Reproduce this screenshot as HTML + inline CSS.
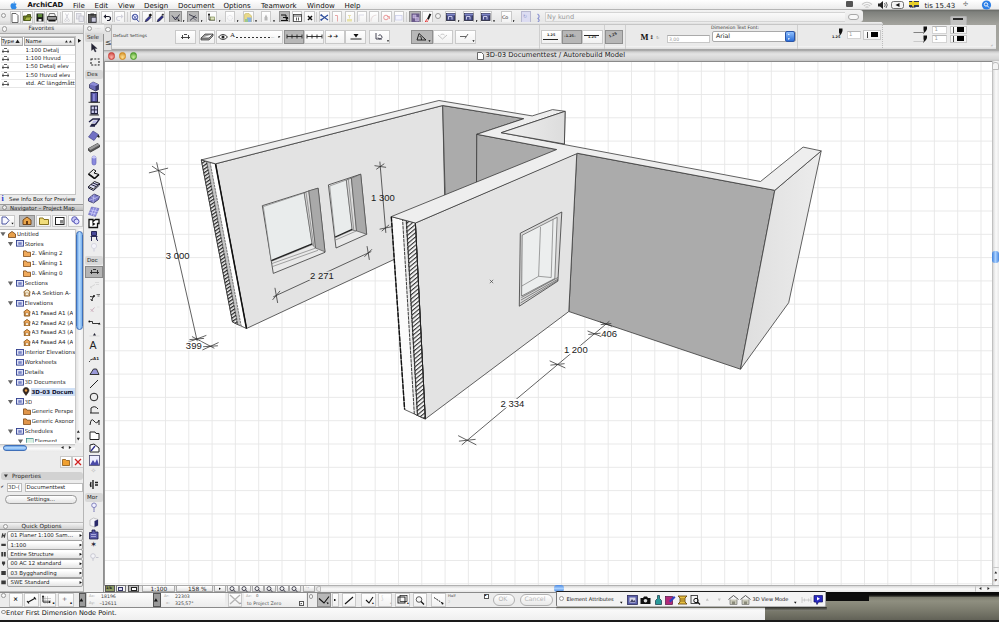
<!DOCTYPE html>
<html><head><meta charset="utf-8"><title>ArchiCAD</title>
<style>
html,body{margin:0;padding:0;}
body{width:999px;height:622px;overflow:hidden;position:relative;background:#fff;font-family:"DejaVu Sans","Liberation Sans",sans-serif;font-size:5.7px;color:#222;}
.a{position:absolute;}
.t{position:absolute;white-space:nowrap;line-height:1.12;}
.btn{position:absolute;background:linear-gradient(#ffffff,#f1f1f1);border:1px solid #c9c9c9;box-sizing:border-box;}
.btnd{position:absolute;background:#b7b7b7;border:1px solid #8f8f8f;box-sizing:border-box;}
.row{position:absolute;left:7.2px;width:76px;height:9.9px;background:linear-gradient(#ffffff 20%,#e4e4e4);border:1px solid #a2a2a2;border-radius:2px;box-sizing:border-box;}
</style></head><body>
<div class="a" style="left:858px;top:9px;width:141px;height:45px;background:linear-gradient(#5e605c,#7e807c 3px,#a2a29c 15px,#a8a8a2)"></div>
<div class="a" style="left:520px;top:590px;width:479px;height:32px;background:linear-gradient(#55554c,#8f8f80 11px,#7c7c6e 20px,#5d5d53)"></div>
<div class="a" style="left:825px;top:592px;width:174px;height:4.500px;background:linear-gradient(#0a0a0a 60%,#55554c)"></div>
<div class="a" style="left:825px;top:594px;width:44px;height:7px;background:#0c0c0c"></div>
<div class="a" style="left:765px;top:607px;width:62px;height:3.500px;background:linear-gradient(#3a3a34,#85857a)"></div>
<svg class="a" style="left:0;top:0" width="999" height="622" viewBox="0 0 999 622">
<defs><clipPath id="cv"><rect x="104" y="61" width="888" height="524"/></clipPath>
<pattern id="hA" width="3" height="3" patternUnits="userSpaceOnUse" patternTransform="rotate(-35)"><rect width="3" height="3" fill="#f4f4f4"/><rect width="3" height="1.3" fill="#222"/></pattern>
<pattern id="hE" width="3.2" height="3.2" patternUnits="userSpaceOnUse" patternTransform="rotate(-40)"><rect width="3.2" height="3.2" fill="#f6f6f6"/><rect width="3.2" height="1.1" fill="#333"/></pattern>
<linearGradient id="gF" x1="0" y1="0" x2="1" y2="0"><stop offset="0" stop-color="#dedede"/><stop offset="1" stop-color="#ececec"/></linearGradient>
<linearGradient id="gC" x1="0" y1="0" x2="1" y2="0"><stop offset="0" stop-color="#f0f0f0"/><stop offset="1" stop-color="#dcdcdc"/></linearGradient>
</defs>
<g clip-path="url(#cv)">
<rect x="104" y="61" width="888" height="524" fill="#fff"/>
<path d="M118.9 61V585M142.2 61V585M165.5 61V585M188.8 61V585M212.1 61V585M235.4 61V585M258.7 61V585M282.0 61V585M305.3 61V585M328.6 61V585M351.9 61V585M375.2 61V585M398.5 61V585M421.8 61V585M445.1 61V585M468.4 61V585M491.7 61V585M515.0 61V585M538.3 61V585M561.6 61V585M584.9 61V585M608.2 61V585M631.5 61V585M654.8 61V585M678.1 61V585M701.4 61V585M724.7 61V585M748.0 61V585M771.3 61V585M794.6 61V585M817.9 61V585M841.2 61V585M864.5 61V585M887.8 61V585M911.1 61V585M934.4 61V585M957.7 61V585M981.0 61V585M104 71.2H992M104 94.5H992M104 117.8H992M104 141.1H992M104 164.4H992M104 187.7H992M104 211.0H992M104 234.3H992M104 257.6H992M104 280.9H992M104 304.2H992M104 327.5H992M104 350.8H992M104 374.1H992M104 397.4H992M104 420.7H992M104 444.0H992M104 467.3H992M104 490.6H992M104 513.9H992M104 537.2H992M104 560.5H992M104 583.8H992M104 607.1H992" stroke="#e6e6e6" stroke-width="0.9" fill="none"/>
<polygon points="215.5,163.8 442.7,105.5 445.5,235.4 246.5,328.5" fill="#e3e3e3" stroke="#3a3a3a" stroke-width="0.8" stroke-linejoin="round"/>
<polygon points="201.3,159.9 215.5,163.8 246.5,328.5 232.5,322.0" fill="#fff" stroke="#3a3a3a" stroke-width="0.8" stroke-linejoin="round"/>
<polygon points="201.3,159.9 206.7,161.4 237.8,324.5 232.5,322.0" fill="url(#hA)" stroke="#222" stroke-width="0.7"/>
<polygon points="206.7,161.4 210.1,162.3 241.2,326.0 237.8,324.5" fill="#c4c4c4" stroke="#333" stroke-width="0.6" stroke-dasharray="2.5 0.8"/>
<line x1="215.5" y1="163.8" x2="246.5" y2="328.5" stroke="#111" stroke-width="1.5"/>
<polygon points="442.7,105.5 523.8,118.7 476.8,134.3 476.5,186.0 445.2,196.0" fill="#ababab" stroke="#3a3a3a" stroke-width="0.8" stroke-linejoin="round"/>
<polygon points="476.8,134.3 556.7,149.5 540.0,165.0 476.5,186.0" fill="#ababab" stroke="#3a3a3a" stroke-width="0.8" stroke-linejoin="round"/>
<polygon points="576.8,153.2 774.8,190.3 740.5,369.2 568.8,311.5" fill="#ababab" stroke="#3a3a3a" stroke-width="0.8" stroke-linejoin="round"/>
<polygon points="774.8,190.3 821.2,150.9 788.7,302.7 740.5,369.2" fill="url(#gF)" stroke="#3a3a3a" stroke-width="0.8" stroke-linejoin="round"/>
<polygon points="501.3,132.7 565.1,111.3 564.4,144.0" fill="url(#gC)" stroke="#3a3a3a" stroke-width="0.8" stroke-linejoin="round"/>
<polygon points="415.4,223.0 576.8,153.2 568.8,311.5 425.3,419.0" fill="#e3e3e3" stroke="#3a3a3a" stroke-width="0.8" stroke-linejoin="round"/>
<polygon points="391.3,216.6 415.4,223.0 425.3,419.0 404.6,409.5" fill="#fbfbfb" stroke="#3a3a3a" stroke-width="0.8" stroke-linejoin="round"/>
<polygon points="402.6,219.6 406.2,220.6 417.4,415.4 414.3,414.0" fill="#ececec" stroke="#1a1a1a" stroke-width="0.85" stroke-dasharray="3.5 0.8"/>
<polygon points="406.5,220.6 415.4,223.0 425.3,419.0 417.6,415.5" fill="url(#hE)" stroke="#1a1a1a" stroke-width="0.8"/>
<line x1="391.3" y1="216.6" x2="404.6" y2="409.5" stroke="#111" stroke-width="1.4" stroke-dasharray="5 1"/>
<line x1="415.4" y1="223.0" x2="425.3" y2="419.0" stroke="#222" stroke-width="1"/>
<polygon points="201.3,159.9 438.9,100.5 532.2,115.9 552.5,109.6 565.1,111.3 501.3,132.7 760.5,181.5 803.1,147.1 821.2,150.9 774.8,190.3 577.7,153.3 415.4,223.0 391.3,216.6 556.7,149.5 476.8,134.3 523.8,118.7 442.7,105.5 215.5,163.8" fill="#eeeeee" stroke="#3a3a3a" stroke-width="0.8" stroke-linejoin="round"/>
<polygon points="501.3,132.7 565.1,111.3 564.4,144.0" fill="url(#gC)" stroke="#3a3a3a" stroke-width="0.8" stroke-linejoin="round"/>
<polygon points="262.3,205.7 318.1,188.2 325.0,252.3 273.3,273.4" fill="#e9e9e9" stroke="#3a3a3a" stroke-width="0.8" stroke-linejoin="round"/>
<polygon points="263.3,206.6 304.2,193.0 312.2,244.7 271.3,261.4" fill="#e9ecec" stroke="#555" stroke-width="0.5"/>
<polygon points="304.2,193.0 308.8,190.8 315.6,248.1 312.2,244.7" fill="#dcdcdc" stroke="#444" stroke-width="0.6"/>
<polygon points="308.8,190.8 318.1,188.2 325.0,251.8 315.6,248.1" fill="#a9a9a9" stroke="#444" stroke-width="0.6"/>
<path d="M271.3 260.6L312.2 243.9" stroke="#222" stroke-width="1.4"/>
<path d="M272 263.5L315.6 248.1M272.6 266.5L318 250.3" stroke="#555" stroke-width="0.5"/>
<path d="M306 192.4L313.8 246" stroke="#555" stroke-width="0.5"/>
<polygon points="328.4,184.9 360.7,174.2 366.7,234.3 336.0,248.0" fill="#e9e9e9" stroke="#3a3a3a" stroke-width="0.8" stroke-linejoin="round"/>
<polygon points="329.7,186.0 346.3,180.0 352.2,230.1 335.2,237.7" fill="#e9ecec" stroke="#555" stroke-width="0.5"/>
<polygon points="346.3,180.0 351.4,178.1 356.5,230.9 352.2,230.1" fill="#dcdcdc" stroke="#444" stroke-width="0.6"/>
<polygon points="351.4,178.1 360.7,174.2 366.7,234.3 356.5,230.9" fill="#a9a9a9" stroke="#444" stroke-width="0.6"/>
<path d="M335.2 237L352.2 229.4" stroke="#222" stroke-width="1.3"/>
<path d="M335.5 240L356.5 230.9" stroke="#555" stroke-width="0.5"/>
<path d="M348.3 179.3L353.8 230.3" stroke="#555" stroke-width="0.5"/>
<polygon points="520.3,233.2 561.8,212.0 557.9,281.1 519.3,306.2" fill="#dadada" stroke="#3a3a3a" stroke-width="0.8" stroke-linejoin="round"/>
<polygon points="522.2,235.2 557.2,217.3 554.8,278.5 521.6,296.0" fill="#eceeee" stroke="#444" stroke-width="0.6"/>
<path d="M540.5 227L538.6 276.3M553 219.5L551.2 277.5M538.6 276.3L551.2 277.5M538.6 276.3L521.8 286" stroke="#666" stroke-width="0.6" fill="none"/>
<path d="M521.4 297.5L557.9 277.5M521 300L557.9 279.2M520.5 303L557.9 280.3" stroke="#444" stroke-width="0.6" fill="none"/>
<path d="M156.7 162.7L197.2 341.0M149.3 172.8L167.7 168.2M152.3 166.3L164.7 174.7M187.5 342.5L206.0 335.5M189.8 339.6L203.7 338.4M192.3 336.7L214.0 348.1M202.8 349.8L218.2 342.7M203.5 346.7L217.5 345.8M273.6 296.7L370.9 251.7M275.0 288.2L277.6 302.6M272.8 299.6L279.8 291.2M367.1 246.5L369.3 259.5M364.7 256.5L371.7 249.5M379.9 162.0L385.8 232.5M374.9 165.7L385.7 167.3M376.6 169.1L384.0 163.9M380.0 229.1L390.8 226.9M382.0 230.9L388.8 225.1M462.1 444.6L609.1 321.5M458.5 435.8L476.0 444.7M459.3 441.1L475.2 439.4M550.0 361.0L565.0 367.8M550.8 365.1L564.2 363.7M587.9 331.1L600.9 336.5M588.7 334.4L600.1 333.2M600.3 322.0L611.7 326.2M601.1 324.6L610.9 323.6" stroke="#2e2e2e" stroke-width="0.75" fill="none" stroke-linecap="round"/>
<path d="M489.8 279.8l3.4 3.4m0 -3.4l-3.4 3.4" stroke="#333" stroke-width="0.6"/>
<text x="177.6" y="258.9" font-family="Liberation Sans, sans-serif" font-size="9.500" fill="#1a1a1a" text-anchor="middle">3 000</text>
<rect x="186.0" y="341.6" width="15.5" height="8.600" fill="#fff"/>
<text x="193.8" y="349.3" font-family="Liberation Sans, sans-serif" font-size="9.500" fill="#1a1a1a" text-anchor="middle">399</text>
<rect x="309.4" y="271.5" width="25.0" height="8.600" fill="#e3e3e3"/>
<text x="321.9" y="279.2" font-family="Liberation Sans, sans-serif" font-size="9.500" fill="#1a1a1a" text-anchor="middle">2 271</text>
<text x="382.9" y="201.1" font-family="Liberation Sans, sans-serif" font-size="9.500" fill="#1a1a1a" text-anchor="middle">1 300</text>
<rect x="499.9" y="399.0" width="25.0" height="8.600" fill="#fff"/>
<text x="512.4" y="406.7" font-family="Liberation Sans, sans-serif" font-size="9.500" fill="#1a1a1a" text-anchor="middle">2 334</text>
<rect x="563.3" y="345.6" width="25.0" height="8.600" fill="#fff"/>
<text x="575.8" y="353.3" font-family="Liberation Sans, sans-serif" font-size="9.500" fill="#1a1a1a" text-anchor="middle">1 200</text>
<rect x="609.2" y="329.5" width="0.0" height="8.600" fill="#fff"/>
<text x="609.2" y="337.2" font-family="Liberation Sans, sans-serif" font-size="9.500" fill="#1a1a1a" text-anchor="middle">406</text>
</g></svg>
<div class="a" style="left:0.0px;top:0.0px;width:999.0px;height:10.0px;background:linear-gradient(#ffffff,#ececec);border-bottom:1px solid #b5b5b5;box-sizing:border-box"></div>
<svg class="a" style="left:9px;top:0.5px" width="9" height="9" viewBox="0 0 18 18"><path d="M12 1c-1.5.3-2.8 1.500-2.800 3 1.500 0 2.900-1.400 2.800-3zM9 5C7.500 4.200 3 4.500 3 9.500c0 3 2 7 4 7 1 0 1.500-.6 2.500-.6s1.500.6 2.500.6c1.600 0 3-2.500 3.500-4.300-2.800-1.200-2.700-5 .1-6.100C14 4.200 10.500 4.200 9 5z" fill="#2f8ae8"/></svg>
<div class="t" style="left:27.5px;top:2.0px;font-size:6.80px;font-weight:bold;color:#111">ArchiCAD</div>
<div class="t" style="left:73.0px;top:1.5px;font-size:7.04px;color:#111">File</div>
<div class="t" style="left:94.5px;top:1.5px;font-size:7.04px;color:#111">Edit</div>
<div class="t" style="left:118.0px;top:1.5px;font-size:7.04px;color:#111">View</div>
<div class="t" style="left:144.0px;top:1.5px;font-size:7.04px;color:#111">Design</div>
<div class="t" style="left:178.0px;top:1.5px;font-size:7.04px;color:#111">Document</div>
<div class="t" style="left:223.5px;top:1.5px;font-size:7.04px;color:#111">Options</div>
<div class="t" style="left:261.0px;top:1.5px;font-size:7.04px;color:#111">Teamwork</div>
<div class="t" style="left:307.0px;top:1.5px;font-size:7.04px;color:#111">Window</div>
<div class="t" style="left:344.5px;top:1.5px;font-size:7.04px;color:#111">Help</div>
<div class="t" style="left:924.5px;top:1.5px;font-size:7.04px;color:#222">tis 15.43</div>
<div class="a" style="left:846.0px;top:1.0px;width:7.0px;height:6.0px;background:#555;border-radius:1px"></div>
<svg class="a" style="left:860px;top:0" width="14" height="10" viewBox="0 0 14 10"><path d="M2 4.500Q7 0 12 4.500M3.800 6Q7 3 10.200 6M5.500 7.500Q7 6.200 8.500 7.500" stroke="#c8c8c8" stroke-width="1.100" fill="none"/></svg>
<svg class="a" style="left:876px;top:0" width="14" height="10" viewBox="0 0 14 10"><path d="M2 3.500h2l3-2.500v8l-3-2.500h-2z" fill="#222"/><path d="M8.500 3q1.500 2 0 4M10 2q2.500 3 0 6" stroke="#444" stroke-width="0.800" fill="none"/></svg>
<svg class="a" style="left:891px;top:1px" width="14" height="8" viewBox="0 0 14 8"><rect x="0.500" y="0.500" width="12" height="7" rx="2" fill="#f4f4f4" stroke="#555" stroke-width="0.800"/><path d="M8.500 2v4l-4-2z" fill="#111"/></svg>
<div class="a" style="left:909.0px;top:0.5px;width:10.0px;height:6.5px;background:#e8cf2a;"></div>
<div class="a" style="left:909.0px;top:0.5px;width:10.0px;height:1.8px;background:#333a55;"></div>
<div class="a" style="left:909.0px;top:5.0px;width:10.0px;height:2.0px;background:#333a55;"></div>
<div class="a" style="left:912.3px;top:0.5px;width:1.5px;height:6.5px;background:#e8cf2a;"></div>
<div class="a" style="left:909.0px;top:2.6px;width:10.0px;height:1.6px;background:#e8cf2a;"></div>
<div class="t" style="left:910.0px;top:6.9px;font-size:2.29px;color:#224;font-weight:bold">PRO</div>
<div class="t" style="left:963.0px;top:1.3px;font-size:6.16px;color:#777">✣</div>
<svg class="a" style="left:981px;top:0" width="11" height="10" viewBox="0 0 11 10"><circle cx="5.500" cy="5" r="4.600" fill="#2d7fe6"/><circle cx="5" cy="4.400" r="1.700" fill="none" stroke="#fff" stroke-width="0.900"/><path d="M6.200 5.700L8 7.600" stroke="#fff" stroke-width="1"/></svg>
<div class="a" style="left:0.0px;top:10.0px;width:862.5px;height:11.5px;background:linear-gradient(#f3f3f3,#e6e6e6);box-sizing:border-box;border-radius:0 3px 3px 0"></div>
<div class="a" style="left:0.0px;top:21.0px;width:104.0px;height:3.5px;background:linear-gradient(#e4e4e4,#cfcfcf);"></div>
<div class="a" style="left:847.5px;top:14.0px;width:11.5px;height:5.5px;background:#f8f8f8;border:1px solid #a8a8a8;border-radius:3px;box-sizing:border-box"></div>
<div class="a" style="left:1px;top:13px;width:5px;height:5px;border:1px solid #999;border-radius:50%;background:#f4f4f4;box-sizing:border-box"></div>
<div class="btn" style="left:9.5px;top:11.0px;width:11.0px;height:12.5px"></div>
<svg class="a" style="left:11.0px;top:12.5px" width="8" height="10" viewBox="0 0 8 10"><path d="M1 0.500h4l2 2v7h-6z" fill="#fff" stroke="#555" stroke-width="0.900"/></svg>
<div class="btn" style="left:21.5px;top:11.0px;width:11.0px;height:12.5px"></div>
<svg class="a" style="left:22.5px;top:13.0px" width="9" height="9" viewBox="0 0 9 9"><path d="M0.500 3h3l1-1.500h3v6h-7z" fill="#6f7f25" stroke="#39440c" stroke-width="0.800"/><path d="M1.500 7.500l1.500-3.500h5.500l-1.500 3.500z" fill="#a5b545" stroke="#39440c" stroke-width="0.600"/></svg>
<div class="btn" style="left:34.0px;top:11.0px;width:11.0px;height:12.5px"></div>
<svg class="a" style="left:35.5px;top:13.0px" width="8" height="9" viewBox="0 0 8 9"><rect x="0.500" y="0.500" width="7" height="8" fill="#1a1a1a"/><rect x="1.800" y="1" width="4.400" height="3.200" fill="#5e8a3a"/><rect x="2.500" y="6" width="3" height="2.500" fill="#e8e8e8"/></svg>
<div class="btn" style="left:46.0px;top:11.0px;width:11.5px;height:12.5px"></div>
<svg class="a" style="left:47.0px;top:13.0px" width="10" height="9" viewBox="0 0 10 9"><path d="M2.500 0.500h5l1 3h-7z" fill="#eee" stroke="#444" stroke-width="0.700"/><path d="M0.500 3.500h9v3.500h-9z" fill="#999" stroke="#222" stroke-width="0.800"/><path d="M1.500 7h7v1.500h-7z" fill="#111"/></svg>
<div class="a" style="left:59.5px;top:12.0px;width:1.0px;height:11.0px;background:#d0d0d0"></div>
<div class="btn" style="left:62.0px;top:11.0px;width:10.5px;height:12.5px"></div>
<svg class="a" style="left:64.0px;top:13.0px" width="6" height="9" viewBox="0 0 6 9"><path d="M1.500 0.500l3 6M4.500 0.500l-3 6" stroke="#cfcfd6" stroke-width="0.900"/><circle cx="1.500" cy="7.500" r="1" fill="none" stroke="#cfcfd6" stroke-width="0.700"/><circle cx="4.500" cy="7.500" r="1" fill="none" stroke="#cfcfd6" stroke-width="0.700"/></svg>
<div class="btn" style="left:74.0px;top:11.0px;width:10.5px;height:12.5px"></div>
<svg class="a" style="left:75.5px;top:13.0px" width="8" height="9" viewBox="0 0 8 9"><rect x="0.500" y="0.500" width="4.500" height="5.500" fill="#e6e6ec" stroke="#c6c6d0" stroke-width="0.800"/><rect x="3" y="3" width="4.500" height="5.500" fill="#e6e6ec" stroke="#c0c0cc" stroke-width="0.800"/></svg>
<div class="btn" style="left:86.0px;top:11.0px;width:11.0px;height:12.5px"></div>
<svg class="a" style="left:87.5px;top:12.5px" width="9" height="10" viewBox="0 0 9 10"><rect x="0.500" y="1.500" width="7.500" height="8" fill="#5a5a5a" stroke="#2a2a2a" stroke-width="0.800"/><rect x="2.500" y="0.500" width="3.500" height="2" fill="#333"/><rect x="3.500" y="4.500" width="4.500" height="4.500" fill="#c8c8dc" stroke="#445" stroke-width="0.600"/></svg>
<div class="a" style="left:99.0px;top:12.0px;width:1.0px;height:11.0px;background:#d0d0d0"></div>
<div class="btn" style="left:101.0px;top:11.0px;width:11.5px;height:12.5px"></div>
<svg class="a" style="left:103.0px;top:14.0px" width="8" height="7" viewBox="0 0 8 7"><path d="M2 2.500h3.500a2 2 0 0 1 0 4h-1.500" fill="none" stroke="#1a1a2a" stroke-width="1.200"/><path d="M0.500 2.500l2.500-2.200v4.400z" fill="#1a1a2a"/></svg>
<div class="btn" style="left:113.5px;top:11.0px;width:11.0px;height:12.5px"></div>
<svg class="a" style="left:115.5px;top:14.0px" width="8" height="7" viewBox="0 0 8 7"><path d="M6 2.500h-3.500a2 2 0 0 0 0 4h1.500" fill="none" stroke="#d2d2dc" stroke-width="1.200"/><path d="M7.500 2.500l-2.500-2.200v4.400z" fill="#d2d2dc"/></svg>
<div class="a" style="left:126.5px;top:12.0px;width:1.0px;height:11.0px;background:#d0d0d0"></div>
<div class="btn" style="left:129.5px;top:11.0px;width:10.5px;height:12.5px"></div>
<svg class="a" style="left:130.5px;top:12.5px" width="9" height="10" viewBox="0 0 9 10"><circle cx="4" cy="4" r="2.800" fill="#e8eaff" stroke="#3a4a9a" stroke-width="0.900"/><path d="M2 2l5 6M6 2.500l-4 4M5.500 6l2.500 3" stroke="#3a4a9a" stroke-width="0.800"/></svg>
<div class="btn" style="left:142.0px;top:11.0px;width:10.5px;height:12.5px"></div>
<svg class="a" style="left:143.5px;top:12.5px" width="8" height="10" viewBox="0 0 8 10"><path d="M1 9l1-2.500 3.500-3.500 1.500 1.500-3.500 3.500z" fill="#3a3a9a" stroke="#111" stroke-width="0.500"/><path d="M4.500 2l2-1.500 1.500 1.500-1.500 2z" fill="#111"/></svg>
<div class="btn" style="left:154.5px;top:11.0px;width:10.5px;height:12.5px"></div>
<svg class="a" style="left:156.0px;top:12.5px" width="8" height="10" viewBox="0 0 8 10"><path d="M1 9l1-2.500 4-4 1.500 1.500-4 4z" fill="#2a2a8a" stroke="#111" stroke-width="0.500"/><path d="M5.500 1.500l1.500-1 1 1-1 1.500z" fill="#333"/></svg>
<div class="btnd" style="left:169.0px;top:11.0px;width:12.5px;height:12.5px"></div>
<svg class="a" style="left:170.5px;top:13.0px" width="10" height="9" viewBox="0 0 10 9"><path d="M1 2.500l3.500 4.500 4-5.500" fill="none" stroke="#223" stroke-width="0.900"/><path d="M3 5.500q2-2.500 4.500 0" fill="none" stroke="#335" stroke-width="0.700"/><path d="M6.500 6l2.500 1.200-1.800 1z" fill="#111"/></svg>
<div class="a" style="left:182.5px;top:20.300px;width:2px;height:2px;background:#111;clip-path:polygon(0 0,100% 0,50% 100%)"></div>
<div class="btnd" style="left:186.5px;top:11.0px;width:12.5px;height:12.5px"></div>
<svg class="a" style="left:188.0px;top:13.0px" width="10" height="9" viewBox="0 0 10 9"><path d="M1 1.500l8 3.500M2 7.500l5.500-5" fill="none" stroke="#334" stroke-width="0.900"/><path d="M5 5l3.500 2.500" stroke="#556" stroke-width="0.700"/></svg>
<div class="a" style="left:200.5px;top:20.300px;width:2px;height:2px;background:#111;clip-path:polygon(0 0,100% 0,50% 100%)"></div>
<div class="btn" style="left:205.5px;top:11.0px;width:11.5px;height:12.5px"></div>
<svg class="a" style="left:207.0px;top:13.0px" width="9" height="9" viewBox="0 0 9 9"><path d="M2 1.500v5.500h6" fill="none" stroke="#222" stroke-width="0.900"/><rect x="3.500" y="4" width="4" height="3" fill="#dfe3c2" stroke="#6a7a3a" stroke-width="0.600"/><circle cx="2" cy="1.500" r="1" fill="#111"/></svg>
<div class="a" style="left:218.5px;top:20.300px;width:2px;height:2px;background:#111;clip-path:polygon(0 0,100% 0,50% 100%)"></div>
<div class="btn" style="left:224.5px;top:11.0px;width:10.5px;height:12.5px"></div>
<svg class="a" style="left:226.0px;top:13.5px" width="8" height="8" viewBox="0 0 8 8"><circle cx="4" cy="4" r="2.500" fill="none" stroke="#d4d4dc" stroke-width="0.800" stroke-dasharray="1 0.700"/></svg>
<div class="a" style="left:236.5px;top:20.300px;width:2px;height:2px;background:#111;clip-path:polygon(0 0,100% 0,50% 100%)"></div>
<div class="btn" style="left:242.5px;top:11.0px;width:11.0px;height:12.5px"></div>
<svg class="a" style="left:244.0px;top:12.5px" width="8" height="10" viewBox="0 0 8 10"><path d="M0.500 2q0-1.500 1.500-1.500h3l2.500 2.500v6.500h-7z" fill="#e8d88a" stroke="#c8b860" stroke-width="0.600"/><rect x="3" y="4.500" width="4.500" height="4.500" fill="#8ab0e0"/><rect x="1" y="6" width="3" height="3" fill="#9ac890"/></svg>
<div class="a" style="left:255.0px;top:20.300px;width:2px;height:2px;background:#111;clip-path:polygon(0 0,100% 0,50% 100%)"></div>
<div class="btn" style="left:261.0px;top:11.0px;width:9.5px;height:12.5px"></div>
<svg class="a" style="left:263.5px;top:14.0px" width="4" height="7" viewBox="0 0 4 7"><path d="M2 0.500l1.500 3v3h-3v-3z" fill="#b8b8b8"/></svg>
<div class="a" style="left:273.0px;top:20.300px;width:2px;height:2px;background:#111;clip-path:polygon(0 0,100% 0,50% 100%)"></div>
<div class="btnd" style="left:278.5px;top:11.0px;width:11.5px;height:12.5px"></div>
<svg class="a" style="left:280.0px;top:13.0px" width="9" height="9" viewBox="0 0 9 9"><path d="M1 2h5v2.500h-3l5 0M1 7.500h7" fill="none" stroke="#111" stroke-width="1"/><path d="M5.500 4l3 1.500-2.500 2z" fill="#111"/></svg>
<div class="btn" style="left:291.5px;top:11.0px;width:10.5px;height:12.5px"></div>
<svg class="a" style="left:292.5px;top:13.5px" width="9" height="8" viewBox="0 0 9 8"><rect x="0.500" y="0.500" width="8" height="7" fill="#fff" stroke="#333" stroke-width="0.800"/><path d="M0.500 2h8M3.500 3.500v3M5.500 3.500v3" stroke="#333" stroke-width="0.800"/></svg>
<div class="btn" style="left:304.0px;top:11.0px;width:10.5px;height:12.5px"></div>
<svg class="a" style="left:306.5px;top:14.5px" width="6" height="6" viewBox="0 0 6 6"><path d="M1 1l4 4M5 1l-4 4" stroke="#111" stroke-width="1.500"/></svg>
<div class="a" style="left:316.0px;top:12.0px;width:1.0px;height:11.0px;background:#d0d0d0"></div>
<div class="btn" style="left:318.5px;top:11.0px;width:11.5px;height:12.5px"></div>
<svg class="a" style="left:320.0px;top:14.0px" width="9" height="7" viewBox="0 0 9 7"><path d="M1 1l7 5M1 6l7-5" stroke="#2a4a9a" stroke-width="1.100"/><circle cx="1.300" cy="1.300" r="1" fill="#2a4a9a"/><circle cx="1.300" cy="5.800" r="1" fill="#2a4a9a"/></svg>
<div class="btn" style="left:332.0px;top:11.0px;width:10.0px;height:12.5px"></div>
<svg class="a" style="left:334.0px;top:13.5px" width="6" height="8" viewBox="0 0 6 8"><path d="M1 1.500h2.500v6" fill="none" stroke="#e8a8a8" stroke-width="1"/></svg>
<div class="btn" style="left:344.5px;top:11.0px;width:10.0px;height:12.5px"></div>
<svg class="a" style="left:346.0px;top:13.5px" width="7" height="8" viewBox="0 0 7 8"><path d="M2 1.500h3M3.500 1.500v3" stroke="#e8e2b0" stroke-width="1"/><rect x="1" y="5" width="5" height="2.500" fill="#e8e2a8"/></svg>
<div class="btn" style="left:356.5px;top:11.0px;width:10.0px;height:12.5px"></div>
<svg class="a" style="left:358.0px;top:13.5px" width="7" height="8" viewBox="0 0 7 8"><path d="M1 7V1h5" fill="none" stroke="#dcdce8" stroke-width="1"/></svg>
<div class="btn" style="left:368.5px;top:11.0px;width:10.0px;height:12.5px"></div>
<svg class="a" style="left:370.0px;top:13.5px" width="7" height="8" viewBox="0 0 7 8"><path d="M1 7.500q0-6 5.500-6.500" fill="none" stroke="#e6dcdc" stroke-width="1.100"/></svg>
<div class="btn" style="left:381.0px;top:11.0px;width:10.5px;height:12.5px"></div>
<svg class="a" style="left:383.0px;top:14.0px" width="7" height="7" viewBox="0 0 7 7"><circle cx="3" cy="3.500" r="2.300" fill="none" stroke="#e89090" stroke-width="0.900"/><path d="M4 2.500h2.500v2.500" fill="none" stroke="#e89090" stroke-width="0.800"/></svg>
<div class="btn" style="left:393.5px;top:11.0px;width:10.5px;height:12.5px"></div>
<svg class="a" style="left:395.0px;top:14.5px" width="8" height="6" viewBox="0 0 8 6"><rect x="0.500" y="0.500" width="6.500" height="4.500" fill="#f4f4ff" stroke="#ccd0ea" stroke-width="0.800"/></svg>
<div class="a" style="left:406.0px;top:12.0px;width:1.0px;height:11.0px;background:#d0d0d0"></div>
<div class="btnd" style="left:409.0px;top:11.0px;width:11.5px;height:12.5px"></div>
<svg class="a" style="left:410.5px;top:12.5px" width="9" height="10" viewBox="0 0 9 10"><rect x="0.500" y="0.500" width="8" height="9" fill="#6a5a8a"/><path d="M2 2h3v3h-3zM4.500 4.500h3v3.500h-3z" fill="#a898c8" stroke="#d8c8e8" stroke-width="0.500"/></svg>
<div class="btn" style="left:422.0px;top:11.0px;width:11.0px;height:12.5px"></div>
<svg class="a" style="left:423.5px;top:12.5px" width="8" height="10" viewBox="0 0 8 10"><path d="M5.500 0.500l1.800 0.800-2.500 5.500-1.800-0.800z" fill="#111"/><path d="M2.800 6.200l-1.500 2.800q1.500 0.500 3-1.500" fill="none" stroke="#e02020" stroke-width="0.900"/></svg>
<div class="a" style="left:435px;top:12.500px;width:6px;height:6px;border:1px solid #999;border-radius:50%;background:#f4f4f4;box-sizing:border-box"></div>
<div class="btn" style="left:444.5px;top:11.0px;width:11.5px;height:12.5px"></div>
<svg class="a" style="left:445.5px;top:13.0px" width="10" height="8" viewBox="0 0 10 8"><rect x="0.500" y="0.500" width="8.500" height="7" fill="#4a4f8a" stroke="#223" stroke-width="0.800"/><rect x="0.500" y="0.500" width="8.500" height="1.800" fill="#8088c8"/><path d="M2.500 6.500v-3h3.500v3" fill="none" stroke="#e8e8ff" stroke-width="0.800"/></svg>
<div class="a" style="left:457.5px;top:20.300px;width:2px;height:2px;background:#111;clip-path:polygon(0 0,100% 0,50% 100%)"></div>
<div class="btn" style="left:462.5px;top:11.0px;width:11.5px;height:12.5px"></div>
<svg class="a" style="left:463.5px;top:13.0px" width="10" height="8" viewBox="0 0 10 8"><rect x="0.500" y="0.500" width="8.500" height="7" fill="#4a4f8a" stroke="#223" stroke-width="0.800"/><rect x="0.500" y="0.500" width="8.500" height="1.800" fill="#8088c8"/><path d="M2.500 6.500v-3h3.500v3" fill="none" stroke="#e8e8ff" stroke-width="0.800"/></svg>
<div class="a" style="left:475.5px;top:20.300px;width:2px;height:2px;background:#111;clip-path:polygon(0 0,100% 0,50% 100%)"></div>
<div class="btn" style="left:480.0px;top:11.0px;width:11.5px;height:12.5px"></div>
<svg class="a" style="left:481.0px;top:13.0px" width="10" height="8" viewBox="0 0 10 8"><rect x="0.500" y="0.500" width="8.500" height="7" fill="#4a4f8a" stroke="#223" stroke-width="0.800"/><rect x="0.500" y="0.500" width="8.500" height="1.800" fill="#8088c8"/><path d="M2.500 6.500v-3h3.500v3" fill="none" stroke="#e8e8ff" stroke-width="0.800"/></svg>
<div class="a" style="left:493.0px;top:20.300px;width:2px;height:2px;background:#111;clip-path:polygon(0 0,100% 0,50% 100%)"></div>
<div class="btn" style="left:500.5px;top:11.0px;width:11.0px;height:12.5px"></div>
<div class="t" style="left:502.0px;top:14.6px;font-size:4.84px;color:#222">Co</div>
<div class="a" style="left:512.5px;top:20.300px;width:2px;height:2px;background:#111;clip-path:polygon(0 0,100% 0,50% 100%)"></div>
<div class="a" style="left:520.500px;top:11px;width:10.500px;height:12.500px;background:#dcdcf2;border:1px solid #b8b8d0;box-sizing:border-box"></div>
<div class="t" style="left:523.0px;top:14.1px;font-size:4.84px;color:#8a90c8">↻</div>
<svg class="a" style="left:535.5px;top:12.5px" width="6" height="10" viewBox="0 0 6 10"><path d="M1.500 1q3 2 0.500 4.500q2.500 2-0.500 4" fill="none" stroke="#8a92d0" stroke-width="1.200"/></svg>
<div class="a" style="left:544.5px;top:11.5px;width:300.0px;height:10.5px;background:linear-gradient(#fafafa,#eeeeee);border:1px solid #d4d4d4;border-right:none;box-sizing:border-box"></div>
<div class="t" style="left:547.0px;top:13.7px;font-size:6.60px;color:#9a9a9a">Ny kund</div>
<div class="a" style="left:0.0px;top:24.5px;width:84.0px;height:180.0px;background:#ececec"></div>
<div class="a" style="left:0.0px;top:24.5px;width:83.5px;height:9.0px;background:linear-gradient(#f6f6f6,#d4d4d4);border-bottom:1px solid #aaa;box-sizing:border-box"></div>
<div class="a" style="left:1.500px;top:26px;width:5.500px;height:5.500px;border:1px solid #999;border-radius:50%;background:#f6f6f6;box-sizing:border-box"></div>
<div class="t" style="left:28.5px;top:25.4px;font-size:5.72px;color:#333">Favorites</div>
<div class="a" style="left:0.0px;top:36.0px;width:75.5px;height:158.5px;background:#fff;border:1px solid #c4c4c4;border-left:none;box-sizing:border-box"></div>
<div class="a" style="left:0.5px;top:36.5px;width:22.5px;height:9.0px;background:linear-gradient(#fdfdfd,#dedede);border:1px solid #a8a8a8;box-sizing:border-box"></div>
<div class="a" style="left:23.5px;top:36.5px;width:51.5px;height:9.0px;background:linear-gradient(#fdfdfd,#dedede);border:1px solid #a8a8a8;box-sizing:border-box"></div>
<div class="t" style="left:1.5px;top:37.7px;font-size:5.46px;color:#222">Type</div>
<div class="a" style="left:15.4px;top:39.0px;width:4.4px;height:4.4px;background:#222;clip-path:polygon(0 90%,100% 90%,50% 10%)"></div>
<div class="t" style="left:25.5px;top:37.7px;font-size:5.46px;color:#222">Name</div>
<div class="a" style="left:65.0px;top:40.1px;width:2.8px;height:2.8px;background:#222;clip-path:polygon(0 90%,100% 90%,50% 10%)"></div>
<div class="a" style="left:69.0px;top:40.1px;width:2.8px;height:2.8px;background:#222;clip-path:polygon(0 90%,100% 90%,50% 10%)"></div>
<div class="a" style="left:77.4px;top:38.8px;width:4.0px;height:4.0px;background:#111;clip-path:polygon(15% 0,95% 50%,15% 100%)"></div>
<div class="t" style="left:25.5px;top:46.7px;font-size:5.46px;color:#262626;max-width:49px;overflow:hidden">1:100 Detalj</div>
<svg class="a" style="left:1px;top:46.5px" width="9" height="7" viewBox="0 0 9 7"><path d="M1 4.500h7M2 2.500v3.500M7 2.500v3.500M3 1.500h3" stroke="#333" stroke-width="0.800" fill="none"/></svg>
<div class="a" style="left:0.5px;top:54.0px;width:74.5px;height:0.6px;background:#e6e6e6"></div>
<div class="t" style="left:25.5px;top:55.0px;font-size:5.46px;color:#262626;max-width:49px;overflow:hidden">1:100 Huvud</div>
<svg class="a" style="left:1px;top:54.8px" width="9" height="7" viewBox="0 0 9 7"><path d="M1 4.500h7M2 2.500v3.500M7 2.500v3.500M3 1.500h3" stroke="#333" stroke-width="0.800" fill="none"/></svg>
<div class="a" style="left:0.5px;top:62.2px;width:74.5px;height:0.6px;background:#e6e6e6"></div>
<div class="t" style="left:25.5px;top:63.2px;font-size:5.46px;color:#262626;max-width:49px;overflow:hidden">1:50 Detalj elev</div>
<svg class="a" style="left:1px;top:63.0px" width="9" height="7" viewBox="0 0 9 7"><path d="M1 4.500h7M2 2.500v3.500M7 2.500v3.500M3 1.500h3" stroke="#333" stroke-width="0.800" fill="none"/></svg>
<div class="a" style="left:0.5px;top:70.5px;width:74.5px;height:0.6px;background:#e6e6e6"></div>
<div class="t" style="left:25.5px;top:71.5px;font-size:5.46px;color:#262626;max-width:49px;overflow:hidden">1:50 Huvud elev</div>
<svg class="a" style="left:1px;top:71.2px" width="9" height="7" viewBox="0 0 9 7"><path d="M1 4.500h7M2 2.500v3.500M7 2.500v3.500M3 1.500h3" stroke="#333" stroke-width="0.800" fill="none"/></svg>
<div class="a" style="left:0.5px;top:78.8px;width:74.5px;height:0.6px;background:#e6e6e6"></div>
<div class="t" style="left:25.5px;top:79.7px;font-size:5.46px;color:#262626;max-width:49px;overflow:hidden">std. AC längdmått</div>
<svg class="a" style="left:1px;top:79.5px" width="9" height="7" viewBox="0 0 9 7"><path d="M1 4.500h7M2 2.500v3.500M7 2.500v3.500M3 1.500h3" stroke="#333" stroke-width="0.800" fill="none"/></svg>
<div class="a" style="left:0.5px;top:87.0px;width:74.5px;height:0.6px;background:#e6e6e6"></div>
<div class="t" style="left:1.5px;top:194.5px;font-size:8.00px;color:#2233cc;font-weight:bold;font-family:'Liberation Serif',serif">i</div>
<div class="t" style="left:9.0px;top:196.1px;font-size:5.46px;color:#262626">See Info Box for Preview</div>
<div class="a" style="left:0.0px;top:204.0px;width:84.0px;height:268.0px;background:#ececec"></div>
<div class="a" style="left:0.0px;top:204.3px;width:83.5px;height:7.0px;background:linear-gradient(#dcdcdc,#bdbdbd);border-top:1px solid #999;border-bottom:1px solid #999;box-sizing:border-box"></div>
<div class="a" style="left:1.500px;top:205px;width:5px;height:5px;border:1px solid #888;border-radius:50%;background:#eee;box-sizing:border-box"></div>
<div class="t" style="left:10.0px;top:204.5px;font-size:5.46px;color:#262626">Navigator – Project Map</div>
<div class="btn" style="left:-1.0px;top:214.5px;width:16.0px;height:12.0px"></div>
<svg class="a" style="left:1px;top:216px" width="12" height="9" viewBox="0 0 12 9"><path d="M1 1h4l3 3.500-3 3.500h-4z" fill="#f8f8ff" stroke="#4a55a0" stroke-width="1"/></svg>
<div class="a" style="left:11.4px;top:222.4px;width:2.2px;height:2.2px;background:#111;clip-path:polygon(0 15%,100% 15%,50% 95%)"></div>
<div class="btnd" style="left:19.0px;top:214.5px;width:15.5px;height:12.0px"></div>
<div class="btn" style="left:36.0px;top:214.5px;width:15.0px;height:12.0px"></div>
<div class="btn" style="left:52.0px;top:214.5px;width:15.0px;height:12.0px"></div>
<div class="btn" style="left:68.0px;top:214.5px;width:15.0px;height:12.0px"></div>
<svg class="a" style="left:22px;top:216px" width="10" height="9" viewBox="0 0 10 9"><path d="M1 4l4-3 4 3v4.500h-8z" fill="#e9a54a" stroke="#6b3c10" stroke-width="0.900"/><rect x="4" y="5" width="2" height="3.500" fill="#6b3c10"/></svg>
<svg class="a" style="left:38.500px;top:216.500px" width="10" height="8" viewBox="0 0 10 8"><path d="M0.500 1h3.500l1 1.500h4.500v5h-9z" fill="#f0dc7a" stroke="#7a6510" stroke-width="0.900"/></svg>
<svg class="a" style="left:54.500px;top:216.500px" width="10" height="8" viewBox="0 0 10 8"><rect x="0.500" y="0.500" width="8.500" height="7" fill="#fff" stroke="#222" stroke-width="1"/><rect x="5" y="3" width="3" height="3.500" fill="#888"/></svg>
<svg class="a" style="left:71px;top:216px" width="9" height="9" viewBox="0 0 9 9"><circle cx="3.500" cy="3.500" r="2.800" fill="#c9c9f2" stroke="#4a4ab0" stroke-width="0.900"/><circle cx="5.500" cy="5.500" r="2.500" fill="#dcdcff" stroke="#4a4ab0" stroke-width="0.900"/></svg>
<div class="a" style="left:0.0px;top:229.0px;width:75.0px;height:214.5px;background:#fff;border-top:1px solid #bbb;box-sizing:border-box"></div>
<div class="a" style="left:0.4px;top:231.4px;width:5.2px;height:5.2px;background:#666;clip-path:polygon(0 15%,100% 15%,50% 95%)"></div>
<svg class="a" style="left:8.0px;top:230.5px" width="8" height="7" viewBox="0 0 9 8"><path d="M0.500 3.500l4-3 4 3v4h-8z" fill="#e8a04a" stroke="#6b3c10" stroke-width="0.900"/></svg>
<div class="t" style="left:17.0px;top:230.7px;font-size:5.54px;color:#262626;overflow:hidden;max-width:58.0px;">Untitled</div>
<div class="a" style="left:7.9px;top:241.3px;width:5.2px;height:5.2px;background:#666;clip-path:polygon(0 15%,100% 15%,50% 95%)"></div>
<svg class="a" style="left:15.5px;top:240.4px;" width="8" height="7" viewBox="0 0 9 8"><rect x="0.500" y="0.500" width="8" height="6.500" fill="#dfe2f6" stroke="#2a3a8a" stroke-width="1"/><rect x="2.500" y="2.500" width="4" height="3" fill="#7a86c8"/></svg>
<div class="t" style="left:24.5px;top:240.5px;font-size:5.54px;color:#262626;overflow:hidden;max-width:50.5px;">Stories</div>
<svg class="a" style="left:22.5px;top:250.4px" width="8" height="7" viewBox="0 0 9 8"><path d="M0.500 1h3l1 1.500h4v5h-8z" fill="#f0aa5c" stroke="#7a4510" stroke-width="0.900"/></svg>
<div class="t" style="left:31.5px;top:250.4px;font-size:5.54px;color:#262626;overflow:hidden;max-width:43.5px;">2. Våning 2</div>
<svg class="a" style="left:22.5px;top:260.3px" width="8" height="7" viewBox="0 0 9 8"><path d="M0.500 1h3l1 1.500h4v5h-8z" fill="#f0aa5c" stroke="#7a4510" stroke-width="0.900"/></svg>
<div class="t" style="left:31.5px;top:260.3px;font-size:5.54px;color:#262626;overflow:hidden;max-width:43.5px;">1. Våning 1</div>
<svg class="a" style="left:22.5px;top:270.2px" width="8" height="7" viewBox="0 0 9 8"><path d="M0.500 1h3l1 1.500h4v5h-8z" fill="#f0aa5c" stroke="#7a4510" stroke-width="0.900"/></svg>
<div class="t" style="left:31.5px;top:270.2px;font-size:5.54px;color:#262626;overflow:hidden;max-width:43.5px;">0. Våning 0</div>
<div class="a" style="left:7.9px;top:280.8px;width:5.2px;height:5.2px;background:#666;clip-path:polygon(0 15%,100% 15%,50% 95%)"></div>
<svg class="a" style="left:15.5px;top:279.9px;" width="8" height="7" viewBox="0 0 9 8"><rect x="0.500" y="0.500" width="8" height="6.500" fill="#dfe2f6" stroke="#2a3a8a" stroke-width="1"/><rect x="2.500" y="2.500" width="4" height="3" fill="#7a86c8"/></svg>
<div class="t" style="left:24.5px;top:280.0px;font-size:5.54px;color:#262626;overflow:hidden;max-width:50.5px;">Sections</div>
<svg class="a" style="left:22.5px;top:289.2px" width="8" height="7.500" viewBox="0 0 9 8.500"><path d="M0.500 3.500l4-3 4 3M1.500 3.500v4.500h6v-4.500" fill="#f4ecd2" stroke="#8a5518" stroke-width="1"/><rect x="3" y="4.500" width="3" height="2.500" fill="#fff8e8" stroke="#8a5518" stroke-width="0.500"/></svg>
<div class="t" style="left:31.5px;top:289.9px;font-size:5.54px;color:#262626;overflow:hidden;max-width:43.5px;">A-A Sektion A-</div>
<div class="a" style="left:7.9px;top:300.5px;width:5.2px;height:5.2px;background:#666;clip-path:polygon(0 15%,100% 15%,50% 95%)"></div>
<svg class="a" style="left:15.5px;top:299.6px;" width="8" height="7" viewBox="0 0 9 8"><rect x="0.500" y="0.500" width="8" height="6.500" fill="#dfe2f6" stroke="#2a3a8a" stroke-width="1"/><rect x="2.500" y="2.500" width="4" height="3" fill="#7a86c8"/></svg>
<div class="t" style="left:24.5px;top:299.8px;font-size:5.54px;color:#262626;overflow:hidden;max-width:50.5px;">Elevations</div>
<svg class="a" style="left:22.5px;top:309.0px" width="8" height="7.500" viewBox="0 0 9 8.500"><path d="M0.500 3.500l4-3 4 3M1.500 3.500v4.500h6v-4.500" fill="#f0aa5c" stroke="#8a5518" stroke-width="1"/><rect x="3" y="4.500" width="3" height="2.500" fill="#fff8e8" stroke="#8a5518" stroke-width="0.500"/></svg>
<div class="t" style="left:31.5px;top:309.6px;font-size:5.54px;color:#262626;overflow:hidden;max-width:43.5px;">A1 Fasad A1 (A</div>
<svg class="a" style="left:22.5px;top:318.8px" width="8" height="7.500" viewBox="0 0 9 8.500"><path d="M0.500 3.500l4-3 4 3M1.500 3.500v4.500h6v-4.500" fill="#f0aa5c" stroke="#8a5518" stroke-width="1"/><rect x="3" y="4.500" width="3" height="2.500" fill="#fff8e8" stroke="#8a5518" stroke-width="0.500"/></svg>
<div class="t" style="left:31.5px;top:319.5px;font-size:5.54px;color:#262626;overflow:hidden;max-width:43.5px;">A2 Fasad A2 (A</div>
<svg class="a" style="left:22.5px;top:328.7px" width="8" height="7.500" viewBox="0 0 9 8.500"><path d="M0.500 3.500l4-3 4 3M1.500 3.500v4.500h6v-4.500" fill="#f0aa5c" stroke="#8a5518" stroke-width="1"/><rect x="3" y="4.500" width="3" height="2.500" fill="#fff8e8" stroke="#8a5518" stroke-width="0.500"/></svg>
<div class="t" style="left:31.5px;top:329.4px;font-size:5.54px;color:#262626;overflow:hidden;max-width:43.5px;">A3 Fasad A3 (A</div>
<svg class="a" style="left:22.5px;top:338.6px" width="8" height="7.500" viewBox="0 0 9 8.500"><path d="M0.500 3.500l4-3 4 3M1.500 3.500v4.500h6v-4.500" fill="#f0aa5c" stroke="#8a5518" stroke-width="1"/><rect x="3" y="4.500" width="3" height="2.500" fill="#fff8e8" stroke="#8a5518" stroke-width="0.500"/></svg>
<div class="t" style="left:31.5px;top:339.2px;font-size:5.54px;color:#262626;overflow:hidden;max-width:43.5px;">A4 Fasad A4 (A</div>
<svg class="a" style="left:15.5px;top:348.9px;" width="8" height="7" viewBox="0 0 9 8"><rect x="0.500" y="0.500" width="8" height="6.500" fill="#dfe2f6" stroke="#2a3a8a" stroke-width="1"/><rect x="2.500" y="2.500" width="4" height="3" fill="#7a86c8"/></svg>
<div class="t" style="left:24.5px;top:349.1px;font-size:5.54px;color:#262626;overflow:hidden;max-width:50.5px;">Interior Elevations</div>
<svg class="a" style="left:15.5px;top:358.8px;" width="8" height="7" viewBox="0 0 9 8"><rect x="0.500" y="0.500" width="8" height="6.500" fill="#dfe2f6" stroke="#2a3a8a" stroke-width="1"/><rect x="2.500" y="2.500" width="4" height="3" fill="#7a86c8"/></svg>
<div class="t" style="left:24.5px;top:359.0px;font-size:5.54px;color:#262626;overflow:hidden;max-width:50.5px;">Worksheets</div>
<svg class="a" style="left:15.5px;top:368.7px;" width="8" height="7" viewBox="0 0 9 8"><rect x="0.500" y="0.500" width="8" height="6.500" fill="#dfe2f6" stroke="#2a3a8a" stroke-width="1"/><rect x="2.500" y="2.500" width="4" height="3" fill="#7a86c8"/></svg>
<div class="t" style="left:24.5px;top:368.9px;font-size:5.54px;color:#262626;overflow:hidden;max-width:50.5px;">Details</div>
<div class="a" style="left:7.9px;top:379.4px;width:5.2px;height:5.2px;background:#666;clip-path:polygon(0 15%,100% 15%,50% 95%)"></div>
<svg class="a" style="left:15.5px;top:378.5px;" width="8" height="7" viewBox="0 0 9 8"><rect x="0.500" y="0.500" width="8" height="6.500" fill="#dfe2f6" stroke="#2a3a8a" stroke-width="1"/><rect x="2.500" y="2.500" width="4" height="3" fill="#7a86c8"/></svg>
<div class="t" style="left:24.5px;top:378.7px;font-size:5.54px;color:#262626;overflow:hidden;max-width:50.5px;">3D Documents</div>
<svg class="a" style="left:22.0px;top:387.4px" width="8" height="9" viewBox="0 0 8 9"><path d="M4 0.500c2 0 3 1.500 3 3s-1.500 2.500-3 5c-1.500-2.500-3-3.500-3-5s1-3 3-3z" fill="#3a2a20" stroke="#111" stroke-width="0.500"/><circle cx="4" cy="3.500" r="1.200" fill="#e8a04a"/></svg>
<div class="a" style="left:31.0px;top:387.7px;width:43.5px;height:8.5px;background:#cfe0f6"></div>
<div class="t" style="left:31.5px;top:388.6px;font-size:5.54px;font-weight:bold;color:#101030">3D-03 Docum</div>
<div class="a" style="left:7.9px;top:399.2px;width:5.2px;height:5.2px;background:#666;clip-path:polygon(0 15%,100% 15%,50% 95%)"></div>
<svg class="a" style="left:15.5px;top:398.3px;" width="8" height="7" viewBox="0 0 9 8"><rect x="0.500" y="0.500" width="8" height="6.500" fill="#dfe2f6" stroke="#2a3a8a" stroke-width="1"/><rect x="2.500" y="2.500" width="4" height="3" fill="#7a86c8"/></svg>
<div class="t" style="left:24.5px;top:398.5px;font-size:5.54px;color:#262626;overflow:hidden;max-width:50.5px;">3D</div>
<svg class="a" style="left:22.5px;top:408.4px" width="8" height="7" viewBox="0 0 9 8"><path d="M0.500 1h3l1 1.500h4v5h-8z" fill="#e0954a" stroke="#7a4510" stroke-width="0.900"/></svg>
<div class="t" style="left:31.5px;top:408.3px;font-size:5.54px;color:#262626;overflow:hidden;max-width:43.5px;">Generic Perspe</div>
<svg class="a" style="left:22.5px;top:418.2px" width="8" height="7" viewBox="0 0 9 8"><path d="M0.500 1h3l1 1.500h4v5h-8z" fill="#e0954a" stroke="#7a4510" stroke-width="0.900"/></svg>
<div class="t" style="left:31.5px;top:418.2px;font-size:5.54px;color:#262626;overflow:hidden;max-width:43.5px;">Generic Axonor</div>
<div class="a" style="left:7.9px;top:428.8px;width:5.2px;height:5.2px;background:#666;clip-path:polygon(0 15%,100% 15%,50% 95%)"></div>
<svg class="a" style="left:15.5px;top:427.9px;" width="8" height="7" viewBox="0 0 9 8"><rect x="0.500" y="0.500" width="8" height="6.500" fill="#dfe2f6" stroke="#2a3a8a" stroke-width="1"/><rect x="2.500" y="2.500" width="4" height="3" fill="#7a86c8"/></svg>
<div class="t" style="left:24.5px;top:428.1px;font-size:5.54px;color:#262626;overflow:hidden;max-width:50.5px;">Schedules</div>
<div class="a" style="left:17.9px;top:438.7px;width:5.2px;height:5.2px;background:#666;clip-path:polygon(0 15%,100% 15%,50% 95%)"></div>
<svg class="a" style="left:25.5px;top:437.8px;clip-path:inset(0 0 2px 0);" width="8" height="7" viewBox="0 0 9 8"><rect x="0.500" y="0.500" width="8" height="7" fill="#d8f0e0" stroke="#3a8a8a" stroke-width="0.900"/></svg>
<div class="t" style="left:34.5px;top:437.9px;font-size:5.54px;color:#262626;overflow:hidden;max-width:40.5px;clip-path:inset(0 0 2px 0);">Element</div>
<div class="a" style="left:75.0px;top:229.0px;width:8.5px;height:214.0px;background:linear-gradient(90deg,#e2e2e2,#fafafa 50%,#ececec);border-left:1px solid #c8c8c8;box-sizing:border-box"></div>
<div class="a" style="left:76.0px;top:231.0px;width:6.5px;height:98.5px;background:linear-gradient(90deg,#5f9ae0,#b9dcff 45%,#78b2ee);border-radius:3.500px;border:0.500px solid #3f6fb8;box-sizing:border-box"></div>
<div class="a" style="left:76.7px;top:429.9px;width:3.2px;height:3.2px;background:#262626;clip-path:polygon(0 90%,100% 90%,50% 10%)"></div>
<div class="a" style="left:76.7px;top:437.4px;width:3.2px;height:3.2px;background:#262626;clip-path:polygon(0 15%,100% 15%,50% 95%)"></div>
<div class="a" style="left:0.0px;top:443.5px;width:75.0px;height:8.0px;background:linear-gradient(#dcdcdc,#fafafa 50%,#e8e8e8);border-top:1px solid #c8c8c8;box-sizing:border-box"></div>
<div class="a" style="left:2.5px;top:444.5px;width:24.0px;height:6.5px;background:linear-gradient(#5f9ae0,#b9dcff 45%,#6aa6ea);border-radius:3.500px;border:0.500px solid #3f6fb8;box-sizing:border-box"></div>
<div class="a" style="left:60.9px;top:445.9px;width:3.2px;height:3.2px;background:#262626;clip-path:polygon(85% 0,5% 50%,85% 100%)"></div>
<div class="a" style="left:68.4px;top:445.9px;width:3.2px;height:3.2px;background:#262626;clip-path:polygon(15% 0,95% 50%,15% 100%)"></div>
<div class="btn" style="left:59.5px;top:455.5px;width:12.0px;height:12.0px"></div>
<div class="btn" style="left:71.5px;top:455.5px;width:12.0px;height:12.0px"></div>
<svg class="a" style="left:61.500px;top:457.500px" width="8" height="8" viewBox="0 0 8 8"><path d="M0.500 1.500h3l1 1h3v5h-7z" fill="#f0a030" stroke="#8a5510" stroke-width="0.800"/></svg>
<svg class="a" style="left:73.500px;top:457.500px" width="8" height="8" viewBox="0 0 8 8"><path d="M1 1l6 6M7 1l-6 6" stroke="#d02020" stroke-width="1.300"/></svg>
<div class="a" style="left:0.0px;top:472.0px;width:84.0px;height:50.0px;background:#ececec"></div>
<div class="a" style="left:0.5px;top:472.0px;width:82.5px;height:7.8px;background:#d2d2d2;border-radius:3px"></div>
<div class="a" style="left:3.9px;top:473.8px;width:4.0px;height:4.0px;background:#333;clip-path:polygon(0 15%,100% 15%,50% 95%)"></div>
<div class="t" style="left:12.0px;top:472.6px;font-size:5.72px;color:#262626">Properties</div>
<div class="t" style="left:0.5px;top:484.6px;font-size:3.96px;color:#222">✔</div>
<div class="a" style="left:6.5px;top:482.5px;width:15.0px;height:9.0px;background:#fff;border:1px solid #bbb;box-sizing:border-box"></div>
<div class="a" style="left:24.5px;top:482.5px;width:58.5px;height:9.0px;background:#fff;border:1px solid #bbb;box-sizing:border-box"></div>
<div class="t" style="left:8.0px;top:483.7px;font-size:5.46px;color:#333">3D-(</div>
<div class="t" style="left:26.5px;top:483.7px;font-size:5.46px;color:#262626">Documenttest</div>
<div class="a" style="left:5.0px;top:494.5px;width:71.5px;height:9.5px;background:linear-gradient(#ffffff,#e4e4e4);border:1px solid #999;border-radius:5px;box-sizing:border-box"></div>
<div class="t" style="left:27.0px;top:495.9px;font-size:5.54px;color:#222">Settings...</div>
<div class="a" style="left:0.0px;top:522.0px;width:84.0px;height:69.5px;background:#ececec;border-top:1px solid #bbb;box-sizing:border-box"></div>
<div class="a" style="left:0.0px;top:522.5px;width:83.5px;height:7.8px;background:linear-gradient(#f4f4f4,#cfcfcf);border-bottom:1px solid #999;box-sizing:border-box"></div>
<div class="a" style="left:2.500px;top:523.500px;width:5.500px;height:5.500px;border:1px solid #999;border-radius:50%;background:#f6f6f6;box-sizing:border-box"></div>
<div class="t" style="left:21.5px;top:522.9px;font-size:5.72px;color:#262626">Quick Options</div>
<div class="row" style="top:530.7px"></div>
<div class="t" style="left:10.5px;top:532.1px;font-size:5.46px;color:#262626">01 Planer 1:100 Sam…</div>
<div class="a" style="left:79.1px;top:534.1px;width:3.0px;height:3.0px;background:#111;clip-path:polygon(15% 0,95% 50%,15% 100%)"></div>
<div class="a" style="left:1.3px;top:533.3px;width:4.5px;height:4.5px;background:#3a3a3a;clip-path:polygon(20% 0,45% 0,40% 30%,70% 30%,75% 0,100% 0,80% 100%,55% 100%,60% 70%,30% 70%,25% 100%,0 100%)"></div>
<div class="row" style="top:540.1px"></div>
<div class="t" style="left:10.5px;top:541.5px;font-size:5.46px;color:#262626">1:100</div>
<div class="a" style="left:79.1px;top:543.5px;width:3.0px;height:3.0px;background:#111;clip-path:polygon(15% 0,95% 50%,15% 100%)"></div>
<div class="a" style="left:1.3px;top:542.7px;width:4.5px;height:4.5px;background:#3a3a3a;clip-path:polygon(0 25%,100% 25%,100% 75%,0 75%)"></div>
<div class="row" style="top:549.4px"></div>
<div class="t" style="left:10.5px;top:550.9px;font-size:5.46px;color:#262626">Entire Structure</div>
<div class="a" style="left:79.1px;top:552.8px;width:3.0px;height:3.0px;background:#111;clip-path:polygon(15% 0,95% 50%,15% 100%)"></div>
<div class="a" style="left:1.3px;top:552.0px;width:4.5px;height:4.5px;background:#3a3a3a;clip-path:polygon(0 0,42% 0,42% 100%,0 100%,0 0,58% 0,100% 0,100% 100%,58% 100%,58% 0)"></div>
<div class="row" style="top:558.8px"></div>
<div class="t" style="left:10.5px;top:560.2px;font-size:5.46px;color:#262626">00 AC 12 standard</div>
<div class="a" style="left:79.1px;top:562.2px;width:3.0px;height:3.0px;background:#111;clip-path:polygon(15% 0,95% 50%,15% 100%)"></div>
<div class="a" style="left:1.3px;top:561.4px;width:4.5px;height:4.5px;background:#3a3a3a;clip-path:polygon(15% 0,85% 0,85% 45%,50% 100%,15% 45%)"></div>
<div class="row" style="top:568.2px"></div>
<div class="t" style="left:10.5px;top:569.6px;font-size:5.46px;color:#262626">03 Bygghandling</div>
<div class="a" style="left:79.1px;top:571.6px;width:3.0px;height:3.0px;background:#111;clip-path:polygon(15% 0,95% 50%,15% 100%)"></div>
<div class="a" style="left:1.3px;top:570.8px;width:4.5px;height:4.5px;background:#3a3a3a;clip-path:polygon(0 0,100% 0,100% 100%,0 100%)"></div>
<div class="row" style="top:577.5px"></div>
<div class="t" style="left:10.5px;top:579.0px;font-size:5.46px;color:#262626">SWE Standard</div>
<div class="a" style="left:79.1px;top:580.9px;width:3.0px;height:3.0px;background:#111;clip-path:polygon(15% 0,95% 50%,15% 100%)"></div>
<div class="a" style="left:1.3px;top:580.1px;width:4.5px;height:4.5px;background:#3a3a3a;clip-path:polygon(0 10%,100% 10%,100% 90%,0 90%)"></div>
<div class="a" style="left:0.0px;top:590.5px;width:84.0px;height:1.0px;background:#bbb"></div>
<div class="a" style="left:83.0px;top:24.5px;width:20.7px;height:567.0px;background:#ededed;border-left:1px solid #b5b5b5;border-right:1px solid #8e8e8e;box-sizing:border-box"></div>
<div class="a" style="left:84.5px;top:24.5px;width:19.0px;height:9.5px;background:linear-gradient(#f8f8f8,#dcdcdc);"></div>
<div class="a" style="left:86.500px;top:25.500px;width:5.500px;height:5.500px;border:1px solid #999;border-radius:50%;background:#f6f6f6;box-sizing:border-box"></div>
<div class="t" style="left:95.0px;top:27.4px;font-size:4.40px;color:#aaa">····</div>
<div class="a" style="left:85.0px;top:33.0px;width:18.0px;height:9.0px;background:#d8d8d8;border-radius:2px"></div>
<div class="t" style="left:87.0px;top:34.2px;font-size:5.54px;color:#222">Sele</div>
<div class="a" style="left:85.0px;top:69.5px;width:18.0px;height:9.0px;background:#d8d8d8;border-radius:2px"></div>
<div class="t" style="left:87.0px;top:70.7px;font-size:5.54px;color:#222">Des</div>
<div class="a" style="left:85.0px;top:255.5px;width:18.0px;height:9.0px;background:#d8d8d8;border-radius:2px"></div>
<div class="t" style="left:87.0px;top:256.7px;font-size:5.54px;color:#222">Doc</div>
<div class="a" style="left:85.0px;top:493.0px;width:18.0px;height:9.0px;background:#d8d8d8;border-radius:2px"></div>
<div class="t" style="left:87.0px;top:494.2px;font-size:5.54px;color:#222">Mor</div>
<svg class="a" style="left:90px;top:43px" width="8" height="10" viewBox="0 0 8 10"><path d="M1.500 0.500v7l2-1.500 1.500 3 1.200-.6-1.500-2.900h2.500z" fill="#223" stroke="#223" stroke-width="0.300"/></svg>
<svg class="a" style="left:89.500px;top:58px" width="10" height="8" viewBox="0 0 10 8"><rect x="1" y="1" width="8" height="6" fill="none" stroke="#222" stroke-width="1.100" stroke-dasharray="2 1.300"/></svg>
<svg class="a" style="left:88.0px;top:80.5px" width="12" height="11" viewBox="0 0 12 11"><path d="M1.500 3.500l3.500-2.500 5.500 2.500v5l-3 1.500-6-3z" fill="#6c6bb8" stroke="#2a2a4a" stroke-width="0.700"/><path d="M7.500 5l3-1.500v5l-3 1.500z" fill="#3a3a6a"/><path d="M1.500 3.500l6 1.500 3-1.500-5.500-2.500z" fill="#8c8bd8"/></svg>
<svg class="a" style="left:88.0px;top:92.0px" width="12" height="11" viewBox="0 0 12 11"><rect x="3" y="0.500" width="6.500" height="9.500" fill="#5a59a8" stroke="#1a1a3a" stroke-width="0.900"/><rect x="5" y="2" width="1.800" height="7" fill="#8a89d8"/><path d="M0.500 10.300h11.500" stroke="#222" stroke-width="0.900"/></svg>
<svg class="a" style="left:88.0px;top:105.0px" width="12" height="11" viewBox="0 0 12 11"><rect x="2.500" y="0.500" width="7.500" height="9" fill="#1e1e3a"/><rect x="3.600" y="1.600" width="2.300" height="2.800" fill="#c8c8ea"/><rect x="6.800" y="1.600" width="2.300" height="2.800" fill="#c8c8ea"/><rect x="3.600" y="5.400" width="2.300" height="2.600" fill="#c8c8ea"/><rect x="6.800" y="5.400" width="2.300" height="2.600" fill="#c8c8ea"/><path d="M1.500 10h9.500" stroke="#222" stroke-width="0.900"/></svg>
<svg class="a" style="left:88.0px;top:117.5px" width="12" height="10" viewBox="0 0 12 10"><path d="M1 4l4-3h6.500l-4 5.500h-3.500l-1 1.500h4" fill="none" stroke="#222244" stroke-width="1.500"/><path d="M5.500 2.500h4l-2 2.500h-3.500z" fill="#b8b8e8"/></svg>
<svg class="a" style="left:88.0px;top:129.5px" width="12" height="11" viewBox="0 0 12 11"><path d="M0.500 7l4.500-6 5.500 3.500-4.500 6z" fill="#7170c4" stroke="#3a3a7a" stroke-width="0.600"/><path d="M10.500 4.500l1.300 2.500-1 .8-1.800-1.300z" fill="#222"/></svg>
<svg class="a" style="left:88.0px;top:142.0px" width="12" height="11" viewBox="0 0 12 11"><path d="M0.500 6.500l9-5 2 1.500v2l-9 5-2-1.500z" fill="#5a5a5a" stroke="#222" stroke-width="0.700"/><path d="M0.500 6.500l9-5 2 1.500-9 5z" fill="#9a9a9a"/></svg>
<svg class="a" style="left:88.0px;top:154.5px" width="12" height="11" viewBox="0 0 12 11"><rect x="4" y="1" width="4" height="9" rx="2" fill="#8a8ade" stroke="#5a5ab0" stroke-width="0.600"/><ellipse cx="6" cy="2.300" rx="2" ry="1.200" fill="#c8c8f8"/></svg>
<svg class="a" style="left:88.0px;top:167.5px" width="12" height="11" viewBox="0 0 12 11"><path d="M0.500 6l5-4.500 2.500 1.500-2 2 5 1.500-4.500 4z" fill="#e8e8e8" stroke="#111" stroke-width="1"/><path d="M0.500 6l6 4.500 4.500-4" fill="none" stroke="#111" stroke-width="1.600"/></svg>
<svg class="a" style="left:88.0px;top:180.0px" width="12" height="11" viewBox="0 0 12 11"><path d="M0.500 6.500l6-5 5 2-6 5.500z" fill="#dcdcf0" stroke="#111" stroke-width="0.900"/><path d="M0.500 6.500v1.500l5 2.500 6-5.500v-1.500M3 4.500l5 2M5 3l5 2" fill="none" stroke="#1a1a3a" stroke-width="1"/></svg>
<svg class="a" style="left:88.0px;top:193.0px" width="12" height="11" viewBox="0 0 12 11"><path d="M0.500 5.500l5.500-4.500 5.500 2.500-1 3-5 3.500-5-2z" fill="#7a79c8" stroke="#2a2a5a" stroke-width="0.800"/><path d="M3 3.500l5 2.500M6 1l-1 9M1 7.500l10-4" stroke="#d8d8f8" stroke-width="0.500" fill="none"/></svg>
<svg class="a" style="left:88.0px;top:205.5px" width="12" height="11" viewBox="0 0 12 11"><path d="M3.500 1l7.500 1.500-3.500 8-7-2z" fill="#8a89dc" stroke="#5555a8" stroke-width="0.500"/><path d="M2.300 3.800l7.500 1.800M1.300 6.300l7.300 1.900M6 1.500l-3 8M8.500 2l-3 8" stroke="#e0e0ff" stroke-width="0.600" fill="none"/></svg>
<svg class="a" style="left:88.0px;top:218.0px" width="12" height="11" viewBox="0 0 12 11"><path d="M1 1.500h4v2l2.500-2h3.500v4h-1.500v4h-8.500z" fill="#fff" stroke="#111" stroke-width="1.300"/><path d="M4.500 4l3 2-3 2z" fill="#111"/></svg>
<svg class="a" style="left:88.0px;top:230.5px" width="12" height="11" viewBox="0 0 12 11"><path d="M3.500 0.500h5v4h-5zM2.500 5.500h7M3.500 5.500v4.500M8.500 5.500v3l1.500 1.500" fill="#4a4a9a" stroke="#1a1a4a" stroke-width="0.900"/></svg>
<svg class="a" style="left:88.0px;top:242.0px" width="12" height="11" viewBox="0 0 12 11"><circle cx="6" cy="4" r="2.600" fill="#f4f4fa" stroke="#d0d0dc" stroke-width="0.800"/><path d="M5 7h2v2.500h-2z" fill="#dcdce4"/></svg>
<div class="a" style="left:85.0px;top:265.5px;width:18.0px;height:12.0px;background:#b4b4b4;border:1px solid #888;box-sizing:border-box"></div>
<svg class="a" style="left:88.500px;top:268px" width="11" height="7" viewBox="0 0 11 7"><path d="M1 4.500h9M2.500 2v4M8.500 2v4M4 1.500h3" stroke="#222" stroke-width="0.900" fill="none"/></svg>
<svg class="a" style="left:88.500px;top:281px" width="12" height="8" viewBox="0 0 12 8"><path d="M1 6.500l5-3M2.500 7.500l-1-2" stroke="#ccc" stroke-width="0.700" fill="none"/><path d="M6 1.500h4M7 3.500h3" stroke="#d4d4d4" stroke-width="0.800"/></svg>
<svg class="a" style="left:88.500px;top:292.500px" width="12" height="10" viewBox="0 0 12 10"><path d="M1 3.500l4 .5M4.500 3l-2 5M1.500 6.500l2.500 1" stroke="#222" stroke-width="0.900" fill="none"/><circle cx="5" cy="3" r="1" fill="#111"/><path d="M7.500 1.500h3.500M8.500 3h2" stroke="#555" stroke-width="0.800"/></svg>
<svg class="a" style="left:88.500px;top:304.500px" width="12" height="9" viewBox="0 0 12 9"><path d="M2 6.500l3.500-4M1.500 4l3 3" stroke="#c8a8b8" stroke-width="0.900" fill="none"/><path d="M8 2h2.500" stroke="#ddd" stroke-width="0.800"/></svg>
<svg class="a" style="left:88px;top:319.500px" width="13" height="6" viewBox="0 0 13 6"><path d="M1 1.500h3.500v2h6.500" stroke="#222" stroke-width="0.900" fill="none"/><circle cx="1.300" cy="1.500" r="0.900" fill="#111"/><path d="M10 4.500l1.500-2 1 2z" fill="#111"/></svg>
<svg class="a" style="left:89px;top:332px" width="11" height="5" viewBox="0 0 11 5"><path d="M0.500 4h10" stroke="#ccc" stroke-width="0.600"/><path d="M4 3.500l1.500-2.500 1.500 2.500z" fill="#223"/></svg>
<div class="t" style="left:89.5px;top:340.0px;font-size:10.50px;color:#222;font-family:'Liberation Sans',sans-serif">A</div>
<div class="t" style="left:93.0px;top:356.9px;font-size:4.05px;color:#222;font-weight:bold">A1</div>
<div class="a" style="left:88.7px;top:360.5px;width:1.6px;height:1.6px;background:#111;border-radius:50%"></div>
<div class="a" style="left:90.0px;top:359.3px;width:3.0px;height:0.7px;background:#333;transform:rotate(-25deg)"></div>
<svg class="a" style="left:88.500px;top:367px" width="11" height="9" viewBox="0 0 11 9"><path d="M1 7.500h9l-2.500-5.500h-3z" fill="#9a99d8" stroke="#222" stroke-width="0.900"/></svg>
<svg class="a" style="left:89px;top:379px" width="10" height="10" viewBox="0 0 10 10"><path d="M1 9L9 1" stroke="#222" stroke-width="1"/></svg>
<svg class="a" style="left:89px;top:392px" width="10" height="10" viewBox="0 0 10 10"><circle cx="5" cy="5" r="3.800" fill="none" stroke="#222" stroke-width="1"/></svg>
<svg class="a" style="left:88.500px;top:405px" width="11" height="9" viewBox="0 0 11 9"><path d="M1 8h9M2 8V3q4-3 7 1" fill="none" stroke="#222" stroke-width="1"/></svg>
<svg class="a" style="left:88.500px;top:417px" width="11" height="9" viewBox="0 0 11 9"><path d="M1 8q1-8 4-4t5-1v5" fill="none" stroke="#222" stroke-width="1"/></svg>
<svg class="a" style="left:88.500px;top:430px" width="11" height="10" viewBox="0 0 11 10"><path d="M1 2h5l1 1.500h3v6h-9z" fill="#fff" stroke="#222" stroke-width="1"/></svg>
<svg class="a" style="left:88.500px;top:443px" width="11" height="10" viewBox="0 0 11 10"><path d="M1 9V2l4-1 5 4v4z" fill="#fff" stroke="#222" stroke-width="1"/><path d="M2 8l4-5" stroke="#2a2a8a" stroke-width="1.300"/></svg>
<svg class="a" style="left:88.500px;top:455px" width="11" height="11" viewBox="0 0 11 11"><rect x="0.500" y="0.500" width="10" height="10" fill="#eef" stroke="#446" stroke-width="0.800"/><path d="M1 10l3-5 2 3 2-4 2 6z" fill="#4a4aa8"/></svg>
<div class="t" style="left:90.5px;top:467.3px;font-size:7.04px;color:#bbb">✧</div>
<svg class="a" style="left:89px;top:479px" width="10" height="11" viewBox="0 0 10 11"><path d="M4 1v9M2 3q-1 2.500 0 5M6 3.500h3M6 6h3" stroke="#222" stroke-width="1.400" fill="none"/></svg>
<svg class="a" style="left:88.0px;top:502.0px" width="12" height="11" viewBox="0 0 12 11"><circle cx="6" cy="3.300" r="2.300" fill="#eef" stroke="#7a7ab8" stroke-width="0.900"/><path d="M6 5.500v3" stroke="#7a7ab8" stroke-width="1"/><circle cx="6" cy="9.300" r="0.700" fill="#7a7ab8"/></svg>
<svg class="a" style="left:88.0px;top:516.5px" width="12" height="11" viewBox="0 0 12 11"><path d="M2 3l3.500-2 4.500 1.500v6l-3.500 1.500-4.500-1.500z" fill="#f4f4f8" stroke="#999" stroke-width="0.500"/><path d="M6.500 4l3.500-1.500v6l-3.500 1.500z" fill="#2a2a6a"/></svg>
<svg class="a" style="left:88.0px;top:529.0px" width="12" height="11" viewBox="0 0 12 11"><path d="M1.500 10v-6.500h2.500v-2.500h3v2h3v7z" fill="#5a5aa8" stroke="#1a1a4a" stroke-width="0.800"/><path d="M3 5.500h5M3 7.500h5" stroke="#c8c8f0" stroke-width="0.700"/></svg>
<div class="t" style="left:90.3px;top:541.2px;font-size:7.92px;color:#223">✶</div>
<svg class="a" style="left:88.0px;top:552.0px" width="12" height="11" viewBox="0 0 12 11"><circle cx="5" cy="4" r="2.300" fill="#f4f4f8" stroke="#c0c0cc" stroke-width="0.800"/><path d="M5 6.300v2.500M8 5.500h2.500" stroke="#c0c0cc" stroke-width="0.900"/></svg>
<div class="a" style="left:104.0px;top:21.5px;width:778.5px;height:28.5px;background:#eaeaea;border-radius:0 3.500px 0 0"></div>
<div class="a" style="left:104.0px;top:21.5px;width:778.5px;height:3.0px;background:linear-gradient(#f0f0f0,#dedede);border-radius:0 3.500px 0 0;border-bottom:1px solid #c6c6c6;box-sizing:border-box"></div>
<div class="a" style="left:882.0px;top:24.5px;width:113.7px;height:25.5px;background:#ececec;border-radius:0 0 2px 0"></div>
<div class="a" style="left:104.0px;top:45.5px;width:891.7px;height:4.5px;background:linear-gradient(#f6f6f6,#dcdcdc);border-bottom:1px solid #a5a5a5;box-sizing:border-box"></div>
<div class="a" style="left:104.0px;top:24.5px;width:7.5px;height:25.0px;background:#e2e2e2;border-right:1px solid #b5b5b5;box-sizing:border-box"></div>
<div class="a" style="left:105px;top:26.500px;width:5.500px;height:5.500px;border:1px solid #999;border-radius:50%;background:#f8f8f8;box-sizing:border-box"></div>
<div class="t" style="left:105.0px;top:39.2px;font-size:7.92px;color:#444">≤</div>
<div class="t" style="left:113.0px;top:33.8px;font-size:4.22px;color:#333">Default Settings</div>
<div class="btn" style="left:175.0px;top:30.0px;width:20.5px;height:13.5px"></div>
<svg class="a" style="left:180px;top:33px" width="11" height="7" viewBox="0 0 11 7"><path d="M1 4.500h9M2.500 2v4M8.500 2v4M4 1.500h3" stroke="#333" stroke-width="0.900" fill="none"/></svg>
<div class="btn" style="left:198.5px;top:30.0px;width:16.0px;height:13.5px"></div>
<svg class="a" style="left:199.500px;top:32px" width="14" height="9" viewBox="0 0 14 9"><path d="M1 6l4-4h8l-4 4zM1 6v2h8l4-4v-2" fill="#999" stroke="#333" stroke-width="0.700"/></svg>
<div class="btn" style="left:216.0px;top:30.0px;width:66.5px;height:13.5px"></div>
<svg class="a" style="left:217.500px;top:33.500px" width="10" height="6" viewBox="0 0 10 6"><path d="M0.500 3q4.500-5 9 0q-4.500 5-9 0z" fill="#fff" stroke="#222" stroke-width="0.900"/><circle cx="5" cy="3" r="1.500" fill="#222"/></svg>
<div class="t" style="left:230.0px;top:32.3px;font-size:7.00px;color:#222;font-family:'Liberation Serif',serif">A</div>
<div class="a" style="left:236.0px;top:37.0px;width:34.0px;height:0.8px;background:repeating-linear-gradient(90deg,#333 0 2.500px,transparent 2.500px 4px)"></div>
<div class="t" style="left:271.0px;top:36.4px;font-size:3.52px;color:#333">...</div>
<div class="a" style="left:278.0px;top:35.5px;width:2.5px;height:2.5px;background:#111;clip-path:polygon(15% 0,95% 50%,15% 100%)"></div>
<div class="btnd" style="left:283.5px;top:30.0px;width:20.5px;height:13.5px"></div>
<div class="btn" style="left:304.0px;top:30.0px;width:20.0px;height:13.5px"></div>
<div class="btn" style="left:324.5px;top:30.0px;width:20.0px;height:13.5px"></div>
<div class="btn" style="left:345.0px;top:30.0px;width:21.0px;height:13.5px"></div>
<svg class="a" style="left:285.5px;top:34px" width="17" height="5" viewBox="0 0 17 5"><path d="M1 2.500h15M1 0.500v4M6 0.500v4M11 0.500v4M16 0.500v4" stroke="#222" stroke-width="0.900" fill="none"/></svg>
<svg class="a" style="left:306.0px;top:34px" width="17" height="5" viewBox="0 0 17 5"><path d="M1 2.500h15M1 0.500v4M6 0.500v4M11 0.500v4M16 0.500v4" stroke="#222" stroke-width="0.900" fill="none"/></svg>
<div class="t" style="left:327.5px;top:32.9px;font-size:5.72px;color:#111;letter-spacing:1px">➔➔</div>
<svg class="a" style="left:350px;top:33px" width="12" height="7" viewBox="0 0 12 7"><path d="M0.500 6h11" stroke="#222" stroke-width="1"/><path d="M3.500 1h5l-2.500 3.500z" fill="#111"/></svg>
<div class="btn" style="left:369.0px;top:30.0px;width:21.0px;height:13.5px"></div>
<svg class="a" style="left:374px;top:32px" width="10" height="9" viewBox="0 0 10 9"><path d="M2 1v6h6M4.500 3.500a2 2 0 1 1-.5 2" stroke="#334" stroke-width="0.900" fill="none"/></svg>
<div class="a" style="left:386.9px;top:39.9px;width:2.2px;height:2.2px;background:#111;clip-path:polygon(0 15%,100% 15%,50% 95%)"></div>
<div class="btnd" style="left:411.0px;top:30.0px;width:21.5px;height:13.5px"></div>
<svg class="a" style="left:416px;top:32px" width="11" height="9" viewBox="0 0 11 9"><path d="M1 8h9L3 1.500zM5.500 8a4 4 0 0 0-1.800-4" stroke="#222" stroke-width="1" fill="none"/></svg>
<div class="a" style="left:428.4px;top:39.9px;width:2.2px;height:2.2px;background:#111;clip-path:polygon(0 15%,100% 15%,50% 95%)"></div>
<div class="btn" style="left:432.5px;top:30.0px;width:20.0px;height:13.5px"></div>
<svg class="a" style="left:437px;top:33px" width="11" height="7" viewBox="0 0 11 7"><path d="M1 2l4.500 4 4.500-4M3.500 2a2.500 2 0 0 1 4 0" stroke="#bbb" stroke-width="0.900" fill="none"/></svg>
<div class="btn" style="left:454.5px;top:30.0px;width:21.0px;height:13.5px"></div>
<svg class="a" style="left:459px;top:33px" width="11" height="7" viewBox="0 0 11 7"><path d="M1 3.500h6M6 5.500l3-4.500" stroke="#555" stroke-width="0.900" fill="none"/></svg>
<div class="a" style="left:472.4px;top:39.9px;width:2.2px;height:2.2px;background:#111;clip-path:polygon(0 15%,100% 15%,50% 95%)"></div>
<div class="a" style="left:539.0px;top:25.0px;width:1.0px;height:24.0px;background:#cfcfcf"></div>
<div class="a" style="left:603.5px;top:25.0px;width:1.0px;height:24.0px;background:#cfcfcf"></div>
<div class="a" style="left:624.5px;top:25.0px;width:1.0px;height:24.0px;background:#cfcfcf"></div>
<div class="btn" style="left:541.0px;top:29.5px;width:20.5px;height:14.5px"></div>
<div class="btnd" style="left:561.5px;top:29.5px;width:20.0px;height:14.5px"></div>
<div class="btn" style="left:581.5px;top:29.5px;width:21.0px;height:14.5px"></div>
<div class="btnd" style="left:604.5px;top:29.5px;width:18.0px;height:14.5px"></div>
<div class="t" style="left:547.0px;top:33.5px;font-size:3.34px;color:#222;font-weight:bold">1.25</div>
<div class="a" style="left:543.0px;top:38.5px;width:15.0px;height:0.7px;background:#222"></div>
<div class="t" style="left:564.0px;top:34.5px;font-size:3.34px;color:#222;font-weight:bold">–1.25–</div>
<div class="t" style="left:588.0px;top:36.0px;font-size:3.34px;color:#222;font-weight:bold">1.25</div>
<div class="a" style="left:584.0px;top:35.0px;width:15.0px;height:0.7px;background:#222"></div>
<div class="t" style="left:609.0px;top:34.4px;font-size:3.52px;color:#222;font-weight:bold;transform:rotate(-25deg)">1.25</div>
<div class="t" style="left:640.5px;top:33.4px;font-size:8.50px;color:#111;font-weight:bold;font-family:'Liberation Serif',serif">M</div>
<div class="t" style="left:649.5px;top:35.3px;font-size:5.28px;color:#111;font-weight:bold">↕</div>
<div class="t" style="left:656.5px;top:36.1px;font-size:3.96px;color:#555">t:</div>
<div class="a" style="left:666.5px;top:35.0px;width:43.0px;height:8.0px;background:#fff;border:1px solid #c8c8c8;box-sizing:border-box;border-top-color:#aaa"></div>
<div class="t" style="left:669.0px;top:36.5px;font-size:4.58px;color:#a0a0a0">3,00</div>
<div class="t" style="left:711.0px;top:25.0px;font-size:4.58px;color:#333">Dimension Text Font:</div>
<div class="a" style="left:711.5px;top:31.0px;width:84.0px;height:11.0px;background:#fff;border:1px solid #aaa;border-radius:2px;box-sizing:border-box"></div>
<div class="t" style="left:716.0px;top:33.0px;font-size:6.16px;color:#111">Arial</div>
<div class="a" style="left:784.5px;top:31.0px;width:10.5px;height:11.0px;background:linear-gradient(#8fc0ff,#2d6fd8);border-radius:2px;border:0.500px solid #2a55a8;box-sizing:border-box"></div>
<div class="a" style="left:787.7px;top:33.2px;width:2.2px;height:2.2px;background:#fff;clip-path:polygon(0 90%,100% 90%,50% 10%)"></div>
<div class="a" style="left:787.7px;top:37.9px;width:2.2px;height:2.2px;background:#fff;clip-path:polygon(0 15%,100% 15%,50% 95%)"></div>
<div class="a" style="left:797.0px;top:25.0px;width:1.0px;height:24.0px;background:#cfcfcf"></div>
<svg class="a" style="left:836px;top:28px" width="9" height="9" viewBox="0 0 9 9"><path d="M3 0.500h3.500q0.500 3-1 5l-2 2.500q0.500-3-0.500-3.500z" fill="#111"/></svg>
<div class="t" style="left:832.0px;top:35.7px;font-size:3.34px;color:#111;font-weight:bold">1.25</div>
<div class="a" style="left:846.5px;top:31.0px;width:14.5px;height:7.5px;background:#fff;border:1px solid #d4d4d4;border-top-color:#b5b5b5;box-sizing:border-box"></div>
<div class="t" style="left:849.0px;top:31.8px;font-size:5.28px;color:#999">1</div>
<div class="btn" style="left:863.0px;top:29.5px;width:17.5px;height:10.0px"></div>
<div class="a" style="left:866.7px;top:32.0px;width:0.8px;height:5.5px;background:#444"></div>
<div class="a" style="left:871.0px;top:32.0px;width:7.0px;height:5.2px;background:#000"></div>
<div class="a" style="left:882.0px;top:25.0px;width:1.0px;height:24.0px;background:repeating-linear-gradient(#bdbdbd 0 1px,transparent 1px 2px)"></div>
<svg class="a" style="left:913px;top:25.5px" width="16" height="9" viewBox="0 0 16 9"><path d="M0.500 6.500h9.500" stroke="#555" stroke-width="0.700"/><path d="M10.500 0.500h3.500q0.500 3-1 4.500l-3 3q1.500-3 0.500-4z" fill="#111"/></svg>
<div class="a" style="left:932.0px;top:26.0px;width:15.0px;height:7.5px;background:#fff;border:1px solid #d4d4d4;border-top-color:#b5b5b5;box-sizing:border-box"></div>
<div class="t" style="left:934.5px;top:26.8px;font-size:5.28px;color:#999">1</div>
<div class="btn" style="left:949.5px;top:25.5px;width:17.0px;height:8.5px"></div>
<div class="a" style="left:953.0px;top:27.0px;width:0.8px;height:5.5px;background:#444"></div>
<div class="a" style="left:957.0px;top:27.2px;width:6.5px;height:5.0px;background:#000"></div>
<svg class="a" style="left:913px;top:34.5px" width="16" height="9" viewBox="0 0 16 9"><path d="M0.500 6.500h9.500" stroke="#bbb" stroke-width="0.700"/><path d="M10.500 0.500h3.500q0.500 3-1 4.500l-3 3q1.500-3 0.500-4z" fill="#111"/></svg>
<div class="a" style="left:932.0px;top:35.0px;width:15.0px;height:7.5px;background:#fff;border:1px solid #d4d4d4;border-top-color:#b5b5b5;box-sizing:border-box"></div>
<div class="t" style="left:934.5px;top:35.8px;font-size:5.28px;color:#999">1</div>
<div class="btn" style="left:949.5px;top:34.5px;width:17.0px;height:8.5px"></div>
<div class="a" style="left:953.0px;top:36.0px;width:0.8px;height:5.5px;background:#444"></div>
<div class="a" style="left:957.0px;top:36.2px;width:6.5px;height:5.0px;background:#000"></div>
<div class="a" style="left:950.0px;top:16.0px;width:16.5px;height:8.5px;background:rgba(200,200,200,0.85);border:1px solid #b0b0b0;border-bottom:none;border-radius:2px 2px 0 0;box-sizing:border-box"></div>
<div class="a" style="left:952.5px;top:18.0px;width:10.5px;height:1.5px;background:#2a2a2a"></div>
<div class="t" style="left:990.5px;top:45.4px;font-size:2.64px;color:#bbb">◢</div>
<div class="a" style="left:103.5px;top:50.0px;width:895.5px;height:11.5px;background:linear-gradient(#9c9c9c,#cfcfcf 1.800px,#e4e4e4 4px,#d6d6d6 9px,#c2c2c2);border-bottom:1px solid #8a8a8a;box-sizing:border-box"></div>
<div class="a" style="left:107.8px;top:52.300px;width:7.500px;height:7.500px;border-radius:50%;background:radial-gradient(circle at 50% 70%,#ffb0a8,#c8403a);border:0.500px solid #c8403a;box-sizing:border-box"></div>
<div class="a" style="left:118.8px;top:52.300px;width:7.500px;height:7.500px;border-radius:50%;background:radial-gradient(circle at 50% 70%,#ffe090,#d08a20);border:0.500px solid #d08a20;box-sizing:border-box"></div>
<div class="a" style="left:129.8px;top:52.300px;width:7.500px;height:7.500px;border-radius:50%;background:radial-gradient(circle at 50% 70%,#c8f098,#4a9a28);border:0.500px solid #4a9a28;box-sizing:border-box"></div>
<svg class="a" style="left:476.500px;top:52px" width="7" height="8" viewBox="0 0 7 8"><path d="M0.500 0.500h4l2 2v5h-6z" fill="#fff" stroke="#444" stroke-width="0.800"/></svg>
<div class="t" style="left:485.5px;top:52.1px;font-size:6.80px;color:#222">3D-03 Documenttest / Autorebuild Model</div>
<div class="a" style="left:103.5px;top:61.0px;width:1.0px;height:524.0px;background:#9a9a9a"></div>
<div class="a" style="left:991.5px;top:61.0px;width:7.5px;height:524.0px;background:linear-gradient(90deg,#dadada,#fbfbfb 50%,#e8e8e8);border-left:1px solid #c0c0c0;box-sizing:border-box"></div>
<div class="a" style="left:992.0px;top:251.0px;width:7.0px;height:12.0px;background:linear-gradient(90deg,#3f7fd8,#a8d0ff 50%,#4a88e0);border-radius:3px"></div>
<div class="a" style="left:994.4px;top:571.1px;width:2.8px;height:2.8px;background:#222;clip-path:polygon(0 90%,100% 90%,50% 10%)"></div>
<div class="a" style="left:994.4px;top:578.9px;width:2.8px;height:2.8px;background:#222;clip-path:polygon(0 15%,100% 15%,50% 95%)"></div>
<div class="a" style="left:992.5px;top:566.5px;width:6.5px;height:1.0px;background:#c8c8c8;border-radius:0 0 3px 3px"></div>
<div class="a" style="left:991.5px;top:62.0px;width:7.0px;height:8.0px;background:#f4f4f4;border:1px solid #bbb;border-radius:3px 3px 0 0;box-sizing:border-box"></div>
<div class="a" style="left:104.0px;top:584.5px;width:895.0px;height:7.5px;background:linear-gradient(#d8d8d8,#fafafa 50%,#e6e6e6);border-top:1px solid #b0b0b0;box-sizing:border-box"></div>
<div class="a" style="left:104.0px;top:584.5px;width:216.0px;height:7.5px;background:#e6e6e6;border-top:1px solid #aaa;box-sizing:border-box"></div>
<div class="a" style="left:105.0px;top:585.0px;width:9.5px;height:7.0px;background:#8d9a62;border:0.500px solid #555;box-sizing:border-box"></div>
<div class="t" style="left:106.0px;top:586.7px;font-size:3.34px;color:#111;font-weight:bold">1/b</div>
<div class="a" style="left:116.0px;top:585.0px;width:9.5px;height:7.0px;background:#f4f4f4;border:0.500px solid #777;box-sizing:border-box"></div>
<div class="a" style="left:118.0px;top:586.5px;width:5.0px;height:4.0px;background:#dde;border:0.600px solid #336;box-sizing:border-box"></div>
<div class="a" style="left:128.0px;top:585.0px;width:11.0px;height:7.0px;background:#bdbdbd;border:0.500px solid #555;box-sizing:border-box"></div>
<div class="a" style="left:130.5px;top:586.5px;width:6.0px;height:4.0px;background:#fff;border:0.700px solid #222;box-sizing:border-box"></div>
<div class="a" style="left:141.5px;top:585.0px;width:33.0px;height:7.0px;background:linear-gradient(#fff,#e4e4e4);border:0.500px solid #aaa;box-sizing:border-box"></div>
<div class="t" style="left:150.5px;top:585.7px;font-size:5.81px;color:#222">1:100</div>
<div class="a" style="left:175.5px;top:585.0px;width:37.0px;height:7.0px;background:linear-gradient(#fff,#e4e4e4);border:0.500px solid #aaa;box-sizing:border-box"></div>
<div class="t" style="left:188.0px;top:585.7px;font-size:5.81px;color:#222">158 %</div>
<div class="a" style="left:213.5px;top:585.0px;width:12.0px;height:7.0px;background:linear-gradient(#fff,#e4e4e4);border:0.500px solid #aaa;box-sizing:border-box"></div>
<div class="a" style="left:218.5px;top:587.4px;width:2.5px;height:2.5px;background:#111;clip-path:polygon(15% 0,95% 50%,15% 100%)"></div>
<div class="a" style="left:226.5px;top:585.0px;width:12.0px;height:7.0px;background:linear-gradient(#fff,#e0e0e0);border:0.500px solid #aaa;box-sizing:border-box"></div>
<svg class="a" style="left:228.5px;top:585.500px" width="8" height="6" viewBox="0 0 8 6"><circle cx="3" cy="2.600" r="2" fill="none" stroke="#223" stroke-width="0.800"/><path d="M4.500 4l2 1.800" stroke="#223" stroke-width="0.900"/></svg>
<div class="a" style="left:239.0px;top:585.0px;width:12.0px;height:7.0px;background:linear-gradient(#fff,#e0e0e0);border:0.500px solid #aaa;box-sizing:border-box"></div>
<svg class="a" style="left:241.0px;top:585.500px" width="8" height="6" viewBox="0 0 8 6"><circle cx="3" cy="2.600" r="2" fill="none" stroke="#223" stroke-width="0.800"/><path d="M4.500 4l2 1.800" stroke="#223" stroke-width="0.900"/></svg>
<div class="a" style="left:251.5px;top:585.0px;width:12.0px;height:7.0px;background:linear-gradient(#fff,#e0e0e0);border:0.500px solid #aaa;box-sizing:border-box"></div>
<svg class="a" style="left:253.5px;top:585.500px" width="8" height="6" viewBox="0 0 8 6"><circle cx="3" cy="2.600" r="2" fill="none" stroke="#223" stroke-width="0.800"/><path d="M4.500 4l2 1.800" stroke="#223" stroke-width="0.900"/></svg>
<div class="a" style="left:264.0px;top:585.0px;width:12.0px;height:7.0px;background:linear-gradient(#fff,#e0e0e0);border:0.500px solid #aaa;box-sizing:border-box"></div>
<svg class="a" style="left:266.0px;top:585.500px" width="8" height="6" viewBox="0 0 8 6"><circle cx="3" cy="2.600" r="2" fill="none" stroke="#223" stroke-width="0.800"/><path d="M4.500 4l2 1.800" stroke="#223" stroke-width="0.900"/></svg>
<div class="a" style="left:276.5px;top:585.0px;width:12.0px;height:7.0px;background:linear-gradient(#fff,#e0e0e0);border:0.500px solid #aaa;box-sizing:border-box"></div>
<svg class="a" style="left:278.5px;top:585.500px" width="8" height="6" viewBox="0 0 8 6"><circle cx="3" cy="2.600" r="2" fill="none" stroke="#223" stroke-width="0.800"/><path d="M4.500 4l2 1.800" stroke="#223" stroke-width="0.900"/></svg>
<div class="a" style="left:289.0px;top:585.0px;width:12.0px;height:7.0px;background:linear-gradient(#fff,#e0e0e0);border:0.500px solid #aaa;box-sizing:border-box"></div>
<svg class="a" style="left:291.0px;top:585.500px" width="8" height="6" viewBox="0 0 8 6"><circle cx="3" cy="2.600" r="2" fill="none" stroke="#223" stroke-width="0.800"/><path d="M4.500 4l2 1.800" stroke="#223" stroke-width="0.900"/></svg>
<div class="a" style="left:302.5px;top:585.0px;width:12.0px;height:7.0px;background:linear-gradient(#fff,#e0e0e0);border:0.500px solid #aaa;box-sizing:border-box"></div>
<div class="t" style="left:305.5px;top:585.9px;font-size:4.40px;color:#bbb">↪</div>
<div class="a" style="left:316.0px;top:585.5px;width:5.0px;height:6.0px;background:#ececec;border-radius:3px 0 0 3px;border:0.500px solid #bbb;box-sizing:border-box"></div>
<div class="a" style="left:554.0px;top:585.0px;width:9.5px;height:6.5px;background:linear-gradient(#4a88e0,#a8d0ff 50%,#3f7fd8);border-radius:3px"></div>
<div class="a" style="left:974.5px;top:585.5px;width:1.0px;height:6.0px;background:#c4c4c4;border-radius:0 3px 3px 0"></div>
<div class="a" style="left:979.0px;top:587.1px;width:2.8px;height:2.8px;background:#222;clip-path:polygon(85% 0,5% 50%,85% 100%)"></div>
<div class="a" style="left:987.0px;top:587.1px;width:2.8px;height:2.8px;background:#222;clip-path:polygon(15% 0,95% 50%,15% 100%)"></div>
<div class="t" style="left:993.0px;top:580.4px;font-size:2.64px;color:#bbb">◢</div>
<div class="a" style="left:0.0px;top:591.5px;width:557.0px;height:16.5px;background:#ececec;border-top:1px solid #8a8a8a;border-bottom:1px solid #8a8a8a;box-sizing:border-box"></div>
<div class="a" style="left:1px;top:593px;width:4.500px;height:4.500px;border:0.800px solid #999;border-radius:50%;background:#f8f8f8;box-sizing:border-box"></div>
<div class="btn" style="left:8.5px;top:593.0px;width:14.0px;height:13.5px"></div>
<div class="btn" style="left:24.0px;top:593.0px;width:14.5px;height:13.5px"></div>
<div class="btn" style="left:39.5px;top:593.0px;width:16.5px;height:13.5px"></div>
<div class="btn" style="left:57.5px;top:593.0px;width:16.0px;height:13.5px"></div>
<div class="t" style="left:13.0px;top:596.1px;font-size:6.16px;color:#111;font-weight:bold">×</div>
<svg class="a" style="left:26px;top:595px" width="11" height="9" viewBox="0 0 11 9"><path d="M1.500 7.500L9.500 3M1 6l2 2.500M8 2l2 2.500" stroke="#111" stroke-width="1.100" fill="none"/></svg>
<svg class="a" style="left:41px;top:594.500px" width="13" height="10" viewBox="0 0 13 10"><path d="M2 1v6.500h7M4 1v8M6.500 1v8M1 3.500h9M1 5.500h9" stroke="#888" stroke-width="0.400" fill="none"/><path d="M2 1.500v5.500h6" stroke="#222" stroke-width="0.900" fill="none"/><circle cx="2" cy="1.500" r="0.900" fill="#111"/><path d="M8 5.800l2 1.200-2 1.200z" fill="#111"/></svg>
<div class="t" style="left:52.5px;top:602.2px;font-size:3.08px;color:#111">▪</div>
<div class="t" style="left:62.0px;top:595.6px;font-size:6.16px;color:#666">+</div>
<div class="t" style="left:70.0px;top:602.2px;font-size:3.08px;color:#111">▪</div>
<div class="a" style="left:78.5px;top:592.5px;width:7.5px;height:14.5px;background:#9a9a9a;border:0.500px solid #555;box-sizing:border-box"></div>
<div class="a" style="left:79.4px;top:597.8px;width:4.0px;height:4.0px;background:#111;clip-path:polygon(0 90%,100% 90%,50% 10%)"></div>
<div class="a" style="left:86.0px;top:592.5px;width:66.0px;height:14.5px;background:linear-gradient(#fdfdfd,#ececec);border-left:1px solid #ccc"></div>
<div class="t" style="left:89.0px;top:594.1px;font-size:3.70px;color:#aaa">Δx:</div>
<div class="t" style="left:101.0px;top:593.5px;font-size:4.66px;color:#444">18196</div>
<div class="t" style="left:89.0px;top:601.3px;font-size:3.70px;color:#aaa">Δy:</div>
<div class="t" style="left:99.5px;top:600.7px;font-size:4.66px;color:#444">–12611</div>
<div class="a" style="left:153.0px;top:592.5px;width:7.5px;height:14.5px;background:#9a9a9a;border:0.500px solid #555;box-sizing:border-box"></div>
<div class="a" style="left:153.9px;top:597.8px;width:4.0px;height:4.0px;background:#111;clip-path:polygon(0 90%,100% 90%,50% 10%)"></div>
<div class="a" style="left:161.0px;top:592.5px;width:64.0px;height:14.5px;background:linear-gradient(#fdfdfd,#ececec);"></div>
<div class="t" style="left:164.0px;top:594.1px;font-size:3.70px;color:#aaa">Δr:</div>
<div class="t" style="left:175.0px;top:593.5px;font-size:4.66px;color:#444">22303</div>
<div class="t" style="left:166.0px;top:601.3px;font-size:3.70px;color:#aaa">α:</div>
<div class="t" style="left:175.0px;top:600.7px;font-size:4.66px;color:#444">325,57°</div>
<div class="btn" style="left:227.5px;top:593.0px;width:14.5px;height:13.5px"></div>
<svg class="a" style="left:229px;top:594px" width="12" height="11" viewBox="0 0 12 11"><path d="M1 1l10 9M11 1l-10 9" stroke="#b4b4b4" stroke-width="1.300"/></svg>
<div class="t" style="left:239.5px;top:603.4px;font-size:2.64px;color:#999">▪</div>
<div class="a" style="left:243.5px;top:592.5px;width:62.0px;height:14.5px;background:linear-gradient(#fdfdfd,#ececec);"></div>
<div class="t" style="left:246.0px;top:594.1px;font-size:3.70px;color:#aaa">Δz:</div>
<div class="t" style="left:256.0px;top:593.9px;font-size:3.96px;color:#555">0</div>
<div class="t" style="left:247.0px;top:600.7px;font-size:4.66px;color:#555">to Project Zero</div>
<div class="a" style="left:299.0px;top:601.0px;width:5.0px;height:5.0px;background:#fff;border:0.700px solid #555;box-sizing:border-box"></div>
<div class="a" style="left:300.4px;top:602.7px;width:1.9px;height:1.9px;background:#111;clip-path:polygon(15% 0,95% 50%,15% 100%)"></div>
<div class="a" style="left:306.5px;top:592.0px;width:1.0px;height:15.5px;background:#8a8a8a"></div>
<div class="a" style="left:308.500px;top:594px;width:4.500px;height:4.500px;border:0.800px solid #999;border-radius:50%;background:#f8f8f8;box-sizing:border-box"></div>
<div class="btnd" style="left:316.5px;top:593.0px;width:14.5px;height:13.5px"></div>
<div class="btn" style="left:331.5px;top:593.0px;width:7.0px;height:13.5px"></div>
<div class="a" style="left:333.5px;top:598.6px;width:2.8px;height:2.8px;background:#111;clip-path:polygon(15% 0,95% 50%,15% 100%)"></div>
<svg class="a" style="left:318px;top:595px" width="12" height="10" viewBox="0 0 12 10"><path d="M1 3.500l5 4.500 5-6.500" stroke="#111" stroke-width="1.100" fill="none"/><path d="M8.500 7l2.500 1-1.500 1.200z" fill="#111"/></svg>
<div class="btn" style="left:341.5px;top:593.0px;width:14.5px;height:13.5px"></div>
<svg class="a" style="left:344px;top:595.500px" width="10" height="9" viewBox="0 0 10 9"><path d="M1 8L9 1" stroke="#111" stroke-width="1.100"/></svg>
<div class="btn" style="left:361.0px;top:593.0px;width:15.0px;height:13.5px"></div>
<svg class="a" style="left:363.500px;top:595.500px" width="10" height="9" viewBox="0 0 10 9"><path d="M2 4l3 3 4-6" stroke="#111" stroke-width="1.100" fill="none"/></svg>
<div class="t" style="left:372.0px;top:602.9px;font-size:2.64px;color:#111">▪</div>
<div class="btn" style="left:377.5px;top:593.0px;width:14.0px;height:13.5px"></div>
<div class="t" style="left:381.0px;top:595.3px;font-size:6.16px;color:#ccc">⟆</div>
<div class="t" style="left:390.0px;top:602.9px;font-size:2.64px;color:#bbb">▪</div>
<div class="btn" style="left:394.5px;top:593.0px;width:15.0px;height:13.5px"></div>
<svg class="a" style="left:396.500px;top:595px" width="11" height="10" viewBox="0 0 11 10"><rect x="1" y="2" width="7" height="6" fill="none" stroke="#111" stroke-width="0.900"/><rect x="3" y="0.500" width="7" height="6" fill="none" stroke="#111" stroke-width="0.700"/></svg>
<div class="t" style="left:407.0px;top:602.9px;font-size:2.64px;color:#111">▪</div>
<div class="btn" style="left:412.5px;top:593.0px;width:14.0px;height:13.5px"></div>
<svg class="a" style="left:415px;top:595.500px" width="10" height="9" viewBox="0 0 10 9"><circle cx="4" cy="3.500" r="2.800" fill="none" stroke="#333" stroke-width="0.800"/><path d="M6 5.500l3 3" stroke="#111" stroke-width="1.200"/></svg>
<div class="btn" style="left:431.0px;top:593.0px;width:15.0px;height:13.5px"></div>
<svg class="a" style="left:433px;top:595.500px" width="11" height="9" viewBox="0 0 11 9"><path d="M1 1.500l9 6" stroke="#111" stroke-width="0.900" stroke-dasharray="2 0.800"/><circle cx="9.500" cy="7.500" r="1" fill="#111"/></svg>
<div class="t" style="left:448.0px;top:593.7px;font-size:3.78px;color:#444">Half</div>
<div class="t" style="left:448.0px;top:601.4px;font-size:3.52px;color:#bbb">2</div>
<div class="a" style="left:483.5px;top:594.0px;width:5.0px;height:5.0px;background:#fff;border:0.700px solid #555;box-sizing:border-box"></div>
<div class="t" style="left:484.5px;top:595.1px;font-size:2.64px;color:#111">▪</div>
<div class="a" style="left:492.5px;top:593.8px;width:22.5px;height:12.0px;background:linear-gradient(#fff,#e8e8e8);border:1px solid #b0b0b0;border-radius:6px;box-sizing:border-box"></div>
<div class="t" style="left:498.5px;top:596.3px;font-size:6.16px;color:#b4b4b4">OK</div>
<div class="a" style="left:519.5px;top:593.8px;width:33.5px;height:12.0px;background:linear-gradient(#fff,#e8e8e8);border:1px solid #b0b0b0;border-radius:6px;box-sizing:border-box"></div>
<div class="t" style="left:524.5px;top:596.3px;font-size:6.16px;color:#b4b4b4">Cancel</div>
<div class="a" style="left:0.0px;top:607.5px;width:765.0px;height:12.5px;background:linear-gradient(#fbfbfb,#efefef);"></div>
<div class="a" style="left:1px;top:609.500px;width:4.500px;height:4.500px;border:0.800px solid #999;border-radius:50%;background:#f8f8f8;box-sizing:border-box"></div>
<div class="t" style="left:6.0px;top:609.5px;font-size:6.60px;color:#111">Enter First Dimension Node Point.</div>
<div class="a" style="left:556.0px;top:591.0px;width:269.5px;height:16.0px;background:#f3f3f3;border-top:1.500px solid #1e1e1e;border-left:1px solid #777;border-right:1px solid #aaa;border-bottom:1px solid #b5b5b5;box-sizing:border-box;border-radius:0 0 2px 2px"></div>
<div class="a" style="left:556.0px;top:607.0px;width:269.5px;height:2.5px;background:linear-gradient(rgba(0,0,0,0.25),rgba(0,0,0,0))"></div>
<div class="a" style="left:558.500px;top:596px;width:5px;height:5px;border:0.800px solid #999;border-radius:50%;background:#fbfbfb;box-sizing:border-box"></div>
<div class="t" style="left:566.5px;top:596.7px;font-size:5.02px;color:#111">Element Attributes</div>
<div class="a" style="left:620.0px;top:601.3px;width:2.5px;height:2.5px;background:#111;clip-path:polygon(0 15%,100% 15%,50% 95%)"></div>
<svg class="a" style="left:627.0px;top:594.500px" width="11" height="10" viewBox="0 0 11 10"><rect x="0.500" y="0.500" width="10" height="9" fill="#5a5fa8" stroke="#2a2a5a" stroke-width="0.800"/><rect x="2.500" y="2.500" width="6" height="5" fill="#d8d8e8"/><path d="M3 7l2-3 1.500 2 1-1 1 2z" fill="#446"/></svg>
<svg class="a" style="left:640.0px;top:594.500px" width="11" height="10" viewBox="0 0 11 10"><path d="M0.500 3h2.500l1-1.500h3l1 1.500h2.500v6h-10z" fill="#111"/><circle cx="5.500" cy="5.800" r="1.800" fill="#ddd"/></svg>
<svg class="a" style="left:652.5px;top:594.500px" width="11" height="10" viewBox="0 0 11 10"><path d="M4.500 0.500h2v3l2 2v4h-6v-4l2-2z" fill="#2a9a9a" stroke="#134" stroke-width="0.700"/></svg>
<svg class="a" style="left:664.5px;top:594.500px" width="11" height="10" viewBox="0 0 11 10"><rect x="0.500" y="1.500" width="7" height="8" fill="#b02878" stroke="#501040" stroke-width="0.700"/><path d="M4 6l5-5 1.500 1.500-5 5z" fill="#3040c0"/></svg>
<svg class="a" style="left:677.0px;top:594.500px" width="11" height="10" viewBox="0 0 11 10"><path d="M1 1h9l-2 2v4l2 2h-9l2-2v-4z" fill="#e8c040" stroke="#6a4a10" stroke-width="0.900"/><path d="M3.500 4h4M3.500 6h4" stroke="#6a4a10" stroke-width="0.700"/></svg>
<svg class="a" style="left:689.5px;top:594.500px" width="11" height="10" viewBox="0 0 11 10"><rect x="1" y="0.500" width="6.500" height="8" fill="#f4f4f4" stroke="#222" stroke-width="0.800"/><circle cx="6" cy="5.500" r="2.200" fill="none" stroke="#111" stroke-width="1"/><path d="M7.500 7l2.500 2.500" stroke="#111" stroke-width="1.200"/></svg>
<div class="a" style="left:705.6px;top:597.9px;width:3.3px;height:3.3px;background:#c4c4c4;clip-path:polygon(0 90%,100% 90%,50% 10%)"></div>
<div class="a" style="left:717.6px;top:598.1px;width:3.3px;height:3.3px;background:#c4c4c4;clip-path:polygon(0 15%,100% 15%,50% 95%)"></div>
<svg class="a" style="left:728.0px;top:594.500px" width="11" height="10" viewBox="0 0 11 10"><path d="M0.500 4.500l5-4 5 4" fill="none" stroke="#555" stroke-width="1"/><path d="M2 4.500v5h7v-5" fill="#c8c8b8" stroke="#777" stroke-width="0.700"/><path d="M4 9.500v-3h3v3" fill="#8a8a7a"/></svg>
<svg class="a" style="left:740.0px;top:594.500px" width="11" height="10" viewBox="0 0 11 10"><path d="M0.500 4.500l5-4 5 4" fill="none" stroke="#555" stroke-width="1"/><path d="M2 4.500v5h7v-5" fill="#c8c8b8" stroke="#777" stroke-width="0.700"/><path d="M4 9.500v-3h3v3" fill="#8a8a7a"/></svg>
<div class="t" style="left:752.5px;top:596.7px;font-size:5.02px;color:#111">3D View Mode</div>
<div class="a" style="left:794.0px;top:601.3px;width:2.5px;height:2.5px;background:#111;clip-path:polygon(0 15%,100% 15%,50% 95%)"></div>
<svg class="a" style="left:801.0px;top:594.500px" width="11" height="10" viewBox="0 0 11 10"><path d="M1 2v6M10 2v6M1 5h9M3.500 3.500v3M7.500 3.500v3" stroke="#c8c8c8" stroke-width="0.900" fill="none"/></svg>
<svg class="a" style="left:813.0px;top:594.500px" width="11" height="10" viewBox="0 0 11 10"><path d="M1 0.500h8.500v6.500h-4l-1.500 2.500-1-2.500h-2z" fill="#2828c0" stroke="#101060" stroke-width="0.700"/><path d="M4 2l3 1.800-3 1.800z" fill="#fff"/></svg>
<div class="a" style="left:0.0px;top:620.0px;width:999.0px;height:2.0px;background:#1a1a1a"></div>
</body></html>
